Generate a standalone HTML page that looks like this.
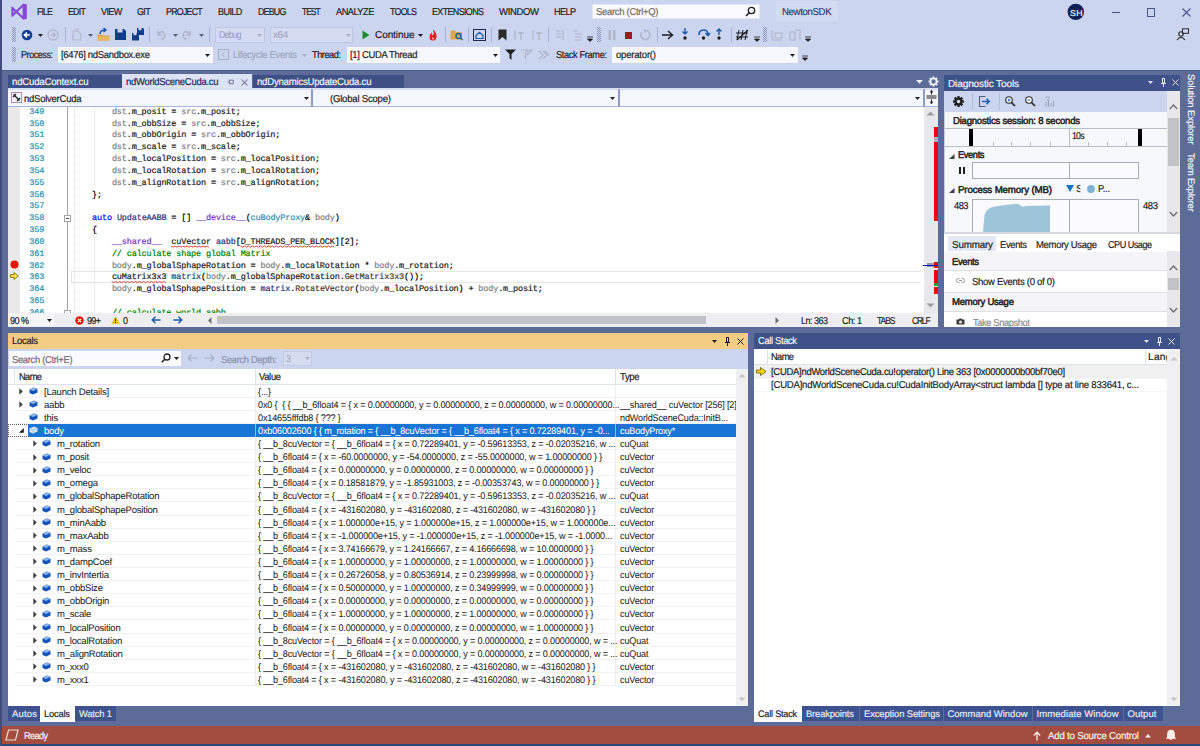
<!DOCTYPE html>
<html><head><meta charset="utf-8"><title>VS</title><style>*{box-sizing:border-box;margin:0;padding:0}
html,body{width:1200px;height:746px;overflow:hidden}
body{position:relative;background:#CCD5F0;font-family:"Liberation Sans",sans-serif;font-size:9px;color:#1E1E1E}
.a{position:absolute}
.t{position:absolute;white-space:pre;line-height:1;-webkit-text-stroke:0.2px currentColor;text-rendering:geometricPrecision}
svg{overflow:visible}
</style></head><body>
<div class="a" style="left:0px;top:0px;width:2px;height:746px;background:#3F4C7C;"></div>
<svg class="a" style="left:11px;top:3px;" width="17" height="17" viewBox="0 0 17 17"><path d="M1.4 5 L12.6 15.6 M1.4 12.4 L12.6 1.8 M1.4 4.6 V12.8" stroke="#8646D6" stroke-width="2.1" fill="none" stroke-linecap="round"/><rect x="11.6" y="1" width="4.2" height="15.3" rx="1.2" fill="#8646D6"/></svg>
<div class="t" id="f1" style="left:36.70px;top:8.00px;font-size:10px;color:#1E1E1E;font-family:'Liberation Sans',sans-serif;letter-spacing:-0.888px;transform-origin:0 0;transform:scaleX(0.8558);">FILE</div>
<div class="t" id="f2" style="left:68.00px;top:8.00px;font-size:10px;color:#1E1E1E;font-family:'Liberation Sans',sans-serif;letter-spacing:-0.830px;transform-origin:0 0;transform:scaleX(0.8773);">EDIT</div>
<div class="t" id="f3" style="left:100.70px;top:8.00px;font-size:10px;color:#1E1E1E;font-family:'Liberation Sans',sans-serif;letter-spacing:-0.710px;transform-origin:0 0;transform:scaleX(0.9090);">VIEW</div>
<div class="t" id="f4" style="left:137.00px;top:8.00px;font-size:10px;color:#1E1E1E;font-family:'Liberation Sans',sans-serif;letter-spacing:-0.743px;transform-origin:0 0;transform:scaleX(0.9022);">GIT</div>
<div class="t" id="f5" style="left:166.00px;top:8.00px;font-size:10px;color:#1E1E1E;font-family:'Liberation Sans',sans-serif;letter-spacing:-0.831px;transform-origin:0 0;transform:scaleX(0.8804);">PROJECT</div>
<div class="t" id="f6" style="left:217.70px;top:8.00px;font-size:10px;color:#1E1E1E;font-family:'Liberation Sans',sans-serif;letter-spacing:-0.644px;transform-origin:0 0;transform:scaleX(0.9041);">BUILD</div>
<div class="t" id="f7" style="left:257.70px;top:8.00px;font-size:10px;color:#1E1E1E;font-family:'Liberation Sans',sans-serif;letter-spacing:-0.908px;transform-origin:0 0;transform:scaleX(0.8863);">DEBUG</div>
<div class="t" id="f8" style="left:302.00px;top:8.00px;font-size:10px;color:#1E1E1E;font-family:'Liberation Sans',sans-serif;letter-spacing:-1.144px;transform-origin:0 0;transform:scaleX(0.8450);">TEST</div>
<div class="t" id="f9" style="left:335.70px;top:8.00px;font-size:10px;color:#1E1E1E;font-family:'Liberation Sans',sans-serif;letter-spacing:-0.545px;transform-origin:0 0;transform:scaleX(0.9213);">ANALYZE</div>
<div class="t" id="f10" style="left:390.00px;top:8.00px;font-size:10px;color:#1E1E1E;font-family:'Liberation Sans',sans-serif;letter-spacing:-0.840px;transform-origin:0 0;transform:scaleX(0.8893);">TOOLS</div>
<div class="t" id="f11" style="left:432.00px;top:8.00px;font-size:10px;color:#1E1E1E;font-family:'Liberation Sans',sans-serif;letter-spacing:-0.693px;transform-origin:0 0;transform:scaleX(0.8929);">EXTENSIONS</div>
<div class="t" id="f12" style="left:499.00px;top:8.00px;font-size:10px;color:#1E1E1E;font-family:'Liberation Sans',sans-serif;letter-spacing:-0.389px;transform-origin:0 0;transform:scaleX(0.9536);">WINDOW</div>
<div class="t" id="f13" style="left:554.00px;top:8.00px;font-size:10px;color:#1E1E1E;font-family:'Liberation Sans',sans-serif;letter-spacing:-0.688px;transform-origin:0 0;transform:scaleX(0.9143);">HELP</div>
<div class="a" style="left:592px;top:4px;width:168px;height:15px;background:#FBFBFD;border:1px solid #E2E6F3"></div>
<div class="t" id="f14" style="left:595.50px;top:8.00px;font-size:10px;color:#6D6D6D;font-family:'Liberation Sans',sans-serif;letter-spacing:-0.278px;transform-origin:0 0;transform:scaleX(0.9413);">Search (Ctrl+Q)</div>
<svg class="a" style="left:745px;top:6px;" width="11" height="11" viewBox="0 0 11 11"><circle cx="6.5" cy="4.5" r="3.2" fill="none" stroke="#1E1E1E" stroke-width="1.3"/><path d="M4.2 6.8 L1 10" stroke="#1E1E1E" stroke-width="1.6"/></svg>
<div class="a" style="left:776px;top:1px;width:62px;height:20px;background:#D3DBF2;"></div>
<div class="t" id="f15" style="left:782.00px;top:8.00px;font-size:10px;color:#2B3C7A;font-family:'Liberation Sans',sans-serif;letter-spacing:-0.311px;transform-origin:0 0;transform:scaleX(0.9522);">NewtonSDK</div>
<svg class="a" style="left:1067px;top:3px;" width="18" height="18" viewBox="0 0 18 18"><circle cx="8.8" cy="8.9" r="8.2" fill="#0F2157"/></svg>
<div class="t" id="f16" style="left:1069.60px;top:9.00px;font-size:8.5px;color:#F2F4FA;font-family:'Liberation Sans',sans-serif;letter-spacing:0.344px;transform-origin:0 0;transform:scaleX(1.0283);">SH</div>
<div class="a" style="left:1112px;top:11.5px;width:8px;height:1.3px;background:#4A5588;"></div>
<div class="a" style="left:1147px;top:8px;width:8px;height:8.5px;background:transparent;border:1.2px solid #4A5588"></div>
<svg class="a" style="left:1182px;top:8px;" width="9" height="9" viewBox="0 0 9 9"><path d="M0.5 0.5 L8.5 8.5 M8.5 0.5 L0.5 8.5" stroke="#4A5588" stroke-width="1.1"/></svg>
<svg class="a" style="left:1176px;top:28px;" width="14" height="13" viewBox="0 0 14 13"><rect x="6.5" y="0.8" width="6" height="4.5" fill="none" stroke="#2A2A2A" stroke-width="1"/><circle cx="5" cy="6" r="2.2" fill="none" stroke="#2A2A2A" stroke-width="1.1"/><path d="M1 12 Q5 6.5 9 12" fill="none" stroke="#2A2A2A" stroke-width="1.1"/></svg>
<svg class="a" style="left:12px;top:27px;" width="4" height="15" viewBox="0 0 4 15"><rect x="0" y="0" width="1" height="1" fill="#8C96BA"/><rect x="2" y="0" width="1" height="1" fill="#8C96BA"/><rect x="1" y="1" width="1" height="1" fill="#8C96BA"/><rect x="3" y="1" width="1" height="1" fill="#8C96BA"/><rect x="0" y="2" width="1" height="1" fill="#8C96BA"/><rect x="2" y="2" width="1" height="1" fill="#8C96BA"/><rect x="1" y="3" width="1" height="1" fill="#8C96BA"/><rect x="3" y="3" width="1" height="1" fill="#8C96BA"/><rect x="0" y="4" width="1" height="1" fill="#8C96BA"/><rect x="2" y="4" width="1" height="1" fill="#8C96BA"/><rect x="1" y="5" width="1" height="1" fill="#8C96BA"/><rect x="3" y="5" width="1" height="1" fill="#8C96BA"/><rect x="0" y="6" width="1" height="1" fill="#8C96BA"/><rect x="2" y="6" width="1" height="1" fill="#8C96BA"/><rect x="1" y="7" width="1" height="1" fill="#8C96BA"/><rect x="3" y="7" width="1" height="1" fill="#8C96BA"/><rect x="0" y="8" width="1" height="1" fill="#8C96BA"/><rect x="2" y="8" width="1" height="1" fill="#8C96BA"/><rect x="1" y="9" width="1" height="1" fill="#8C96BA"/><rect x="3" y="9" width="1" height="1" fill="#8C96BA"/><rect x="0" y="10" width="1" height="1" fill="#8C96BA"/><rect x="2" y="10" width="1" height="1" fill="#8C96BA"/><rect x="1" y="11" width="1" height="1" fill="#8C96BA"/><rect x="3" y="11" width="1" height="1" fill="#8C96BA"/><rect x="0" y="12" width="1" height="1" fill="#8C96BA"/><rect x="2" y="12" width="1" height="1" fill="#8C96BA"/><rect x="1" y="13" width="1" height="1" fill="#8C96BA"/><rect x="3" y="13" width="1" height="1" fill="#8C96BA"/><rect x="0" y="14" width="1" height="1" fill="#8C96BA"/><rect x="2" y="14" width="1" height="1" fill="#8C96BA"/></svg>
<svg class="a" style="left:12px;top:47px;" width="4" height="15" viewBox="0 0 4 15"><rect x="0" y="0" width="1" height="1" fill="#8C96BA"/><rect x="2" y="0" width="1" height="1" fill="#8C96BA"/><rect x="1" y="1" width="1" height="1" fill="#8C96BA"/><rect x="3" y="1" width="1" height="1" fill="#8C96BA"/><rect x="0" y="2" width="1" height="1" fill="#8C96BA"/><rect x="2" y="2" width="1" height="1" fill="#8C96BA"/><rect x="1" y="3" width="1" height="1" fill="#8C96BA"/><rect x="3" y="3" width="1" height="1" fill="#8C96BA"/><rect x="0" y="4" width="1" height="1" fill="#8C96BA"/><rect x="2" y="4" width="1" height="1" fill="#8C96BA"/><rect x="1" y="5" width="1" height="1" fill="#8C96BA"/><rect x="3" y="5" width="1" height="1" fill="#8C96BA"/><rect x="0" y="6" width="1" height="1" fill="#8C96BA"/><rect x="2" y="6" width="1" height="1" fill="#8C96BA"/><rect x="1" y="7" width="1" height="1" fill="#8C96BA"/><rect x="3" y="7" width="1" height="1" fill="#8C96BA"/><rect x="0" y="8" width="1" height="1" fill="#8C96BA"/><rect x="2" y="8" width="1" height="1" fill="#8C96BA"/><rect x="1" y="9" width="1" height="1" fill="#8C96BA"/><rect x="3" y="9" width="1" height="1" fill="#8C96BA"/><rect x="0" y="10" width="1" height="1" fill="#8C96BA"/><rect x="2" y="10" width="1" height="1" fill="#8C96BA"/><rect x="1" y="11" width="1" height="1" fill="#8C96BA"/><rect x="3" y="11" width="1" height="1" fill="#8C96BA"/><rect x="0" y="12" width="1" height="1" fill="#8C96BA"/><rect x="2" y="12" width="1" height="1" fill="#8C96BA"/><rect x="1" y="13" width="1" height="1" fill="#8C96BA"/><rect x="3" y="13" width="1" height="1" fill="#8C96BA"/><rect x="0" y="14" width="1" height="1" fill="#8C96BA"/><rect x="2" y="14" width="1" height="1" fill="#8C96BA"/></svg>
<svg class="a" style="left:21px;top:29px;" width="12" height="12" viewBox="0 0 12 12"><circle cx="6" cy="6" r="5.3" fill="#0E3E8C"/><path d="M8.8 6 H4 M6 3.6 L3.4 6 L6 8.4" stroke="#fff" stroke-width="1.6" fill="none"/></svg>
<svg class="a" style="left:37.5px;top:33.5px;" width="5" height="3" viewBox="0 0 5 3"><path d="M0 0 H5 L2.5 3 Z" fill="#1E1E1E"/></svg>
<svg class="a" style="left:47px;top:29px;" width="12" height="12" viewBox="0 0 12 12"><circle cx="6" cy="6" r="5" fill="none" stroke="#B4B9C9" stroke-width="1.3"/><path d="M3.5 6 H8 M6 3.8 L8.2 6 L6 8.2" stroke="#B4B9C9" stroke-width="1.4" fill="none"/></svg>
<div class="a" style="left:64.5px;top:27px;width:1px;height:15px;background:#A8B3D3;"></div>
<svg class="a" style="left:72px;top:28px;" width="10" height="13" viewBox="0 0 10 13"><path d="M1 3 H6 L9 6 V12 H1 Z M3 1 H7" fill="none" stroke="#B4B9C9" stroke-width="1.1"/></svg>
<svg class="a" style="left:87.5px;top:33.5px;" width="5" height="3" viewBox="0 0 5 3"><path d="M0 0 H5 L2.5 3 Z" fill="#55607F"/></svg>
<svg class="a" style="left:97px;top:28px;" width="13" height="13" viewBox="0 0 13 13"><path d="M0.5 6.5 H5 L6 7.5 H12.5 V12.5 H0.5 Z" fill="#DCA54B"/><path d="M0.5 8.5 H12.5 V12.5 H0.5 Z" fill="#E8B85E"/><path d="M3 6 Q3 2 8 2 M6.5 0 L9 2 L6.5 4" stroke="#1F5BA8" stroke-width="1.5" fill="none"/></svg>
<svg class="a" style="left:115px;top:29px;" width="11" height="11" viewBox="0 0 11 11"><path d="M0 0 H9 L11 2 V11 H0 Z" fill="#0E3E8C"/><rect x="2.5" y="0" width="5" height="3.5" fill="#CCD5F0"/><rect x="2" y="6.5" width="7" height="4.5" fill="#0E3E8C"/></svg>
<svg class="a" style="left:132px;top:28px;" width="12" height="13" viewBox="0 0 12 13"><path d="M5 0 H11 L12 1 V7 H5 Z" fill="#0E3E8C"/><path d="M0 5 H6 L7 6 V12.5 H0 Z" fill="#0E3E8C"/><rect x="1.5" y="5" width="3" height="2.2" fill="#CCD5F0"/><rect x="6.5" y="0" width="3" height="2.2" fill="#CCD5F0"/></svg>
<div class="a" style="left:149px;top:27px;width:1px;height:15px;background:#A8B3D3;"></div>
<svg class="a" style="left:155px;top:29px;" width="11" height="12" viewBox="0 0 11 12"><path d="M3 2 V6 H7 M3 6 Q5 2 8 3 Q11 5 9 9 L6 11" stroke="#B0B6C8" stroke-width="1.5" fill="none"/></svg>
<svg class="a" style="left:172.5px;top:33.5px;" width="5" height="3" viewBox="0 0 5 3"><path d="M0 0 H5 L2.5 3 Z" fill="#55607F"/></svg>
<svg class="a" style="left:182px;top:29px;" width="11" height="12" viewBox="0 0 11 12"><path d="M8 2 V6 H4 M8 6 Q6 2 3 3 Q0 5 2 9 L5 11" stroke="#B0B6C8" stroke-width="1.5" fill="none"/></svg>
<svg class="a" style="left:198.5px;top:33.5px;" width="5" height="3" viewBox="0 0 5 3"><path d="M0 0 H5 L2.5 3 Z" fill="#55607F"/></svg>
<div class="a" style="left:208.5px;top:27px;width:1px;height:15px;background:#A8B3D3;"></div>
<div class="a" style="left:215px;top:27px;width:50px;height:16px;background:#D5DCF1;border:1px solid #BFC8E0"></div>
<div class="t" id="f17" style="left:218.50px;top:31.00px;font-size:10px;color:#9EA6BE;font-family:'Liberation Sans',sans-serif;letter-spacing:-0.871px;transform-origin:0 0;transform:scaleX(0.8659);">Debug</div>
<svg class="a" style="left:256.5px;top:33.5px;" width="5" height="3" viewBox="0 0 5 3"><path d="M0 0 H5 L2.5 3 Z" fill="#A9B0C6"/></svg>
<div class="a" style="left:270px;top:27px;width:83px;height:16px;background:#D5DCF1;border:1px solid #BFC8E0"></div>
<div class="t" id="f18" style="left:272.50px;top:31.00px;font-size:10px;color:#9EA6BE;font-family:'Liberation Sans',sans-serif;letter-spacing:-0.281px;transform-origin:0 0;transform:scaleX(0.9639);">x64</div>
<svg class="a" style="left:345.5px;top:33.5px;" width="5" height="3" viewBox="0 0 5 3"><path d="M0 0 H5 L2.5 3 Z" fill="#A9B0C6"/></svg>
<svg class="a" style="left:362px;top:30px;" width="8" height="10" viewBox="0 0 8 10"><path d="M0.5 0.5 L7.5 5 L0.5 9.5 Z" fill="#1E8A2E"/></svg>
<div class="t" id="f19" style="left:375.00px;top:31.00px;font-size:10px;color:#1E1E1E;font-family:'Liberation Sans',sans-serif;letter-spacing:-0.076px;transform-origin:0 0;transform:none;">Continue</div>
<svg class="a" style="left:417.5px;top:33.5px;" width="5" height="3" viewBox="0 0 5 3"><path d="M0 0 H5 L2.5 3 Z" fill="#1E1E1E"/></svg>
<svg class="a" style="left:428px;top:29px;" width="10" height="12" viewBox="0 0 10 12"><path d="M5 0.5 Q9 4 8.5 8 Q8 11.5 5 11.5 Q1.5 11.5 1.5 8 Q1.5 5 3.5 3.5 Q3.5 6 5 6.5 Q6.5 4 5 0.5 Z" fill="#E02020"/><path d="M5 8 Q6.5 9.5 5 11 Q3.5 9.5 5 8Z" fill="#fff"/></svg>
<div class="a" style="left:445px;top:27px;width:1px;height:15px;background:#A8B3D3;"></div>
<svg class="a" style="left:450px;top:29px;" width="13" height="12" viewBox="0 0 13 12"><path d="M0.5 1.5 H5 L6 3 H12 V10.5 H0.5 Z" fill="#DCA54B"/><circle cx="8.5" cy="7" r="2.5" fill="none" stroke="#1F5BA8" stroke-width="1.3"/><path d="M10.5 9 L12.5 11" stroke="#1F5BA8" stroke-width="1.5"/></svg>
<div class="a" style="left:468px;top:27px;width:1px;height:15px;background:#A8B3D3;"></div>
<svg class="a" style="left:473px;top:29px;" width="13" height="12" viewBox="0 0 13 12"><rect x="0.5" y="0.5" width="12" height="11" fill="none" stroke="#1E2A4A" stroke-width="1"/><path d="M3 6.5 L6.5 3.2 L10 6.5 V9.5 H3 Z" fill="none" stroke="#1F5BA8" stroke-width="1.2"/></svg>
<div class="a" style="left:491px;top:27px;width:1px;height:15px;background:#A8B3D3;"></div>
<svg class="a" style="left:498px;top:29px;" width="9" height="12" viewBox="0 0 9 12"><path d="M0.5 0.5 H8.5 V11.5 L4.5 8 L0.5 11.5 Z" fill="#2B2B2B"/></svg>
<svg class="a" style="left:513px;top:29px;" width="12" height="12" viewBox="0 0 12 12"><path d="M2 1 V11 M8 3 V11 M5 4 H11" stroke="#B0B6C8" stroke-width="1.3"/></svg>
<svg class="a" style="left:531px;top:29px;" width="12" height="12" viewBox="0 0 12 12"><path d="M2 1 V11 M8 3 V11 M5 4 H11" stroke="#B0B6C8" stroke-width="1.3"/></svg>
<div class="a" style="left:548px;top:27px;width:1px;height:15px;background:#A8B3D3;"></div>
<svg class="a" style="left:555px;top:29px;" width="11" height="12" viewBox="0 0 11 12"><path d="M1 2 H6 M1 5 H6 M1 8 H6 M8 1 V11" stroke="#B0B6C8" stroke-width="1.2"/></svg>
<svg class="a" style="left:572px;top:29px;" width="11" height="12" viewBox="0 0 11 12"><path d="M1 2 H6 M3 5 H10 M3 8 H10 M3 11 H10" stroke="#B0B6C8" stroke-width="1.2"/></svg>
<svg class="a" style="left:587px;top:37px;" width="6" height="5" viewBox="0 0 6 5"><path d="M0 0 H6 M0.5 2 H5.5 L3 4.5 Z" stroke="#1E1E1E" stroke-width="0.8" fill="#1E1E1E"/></svg>
<svg class="a" style="left:597px;top:27px;" width="4" height="15" viewBox="0 0 4 15"><rect x="0" y="0" width="1" height="1" fill="#8C96BA"/><rect x="2" y="0" width="1" height="1" fill="#8C96BA"/><rect x="1" y="1" width="1" height="1" fill="#8C96BA"/><rect x="3" y="1" width="1" height="1" fill="#8C96BA"/><rect x="0" y="2" width="1" height="1" fill="#8C96BA"/><rect x="2" y="2" width="1" height="1" fill="#8C96BA"/><rect x="1" y="3" width="1" height="1" fill="#8C96BA"/><rect x="3" y="3" width="1" height="1" fill="#8C96BA"/><rect x="0" y="4" width="1" height="1" fill="#8C96BA"/><rect x="2" y="4" width="1" height="1" fill="#8C96BA"/><rect x="1" y="5" width="1" height="1" fill="#8C96BA"/><rect x="3" y="5" width="1" height="1" fill="#8C96BA"/><rect x="0" y="6" width="1" height="1" fill="#8C96BA"/><rect x="2" y="6" width="1" height="1" fill="#8C96BA"/><rect x="1" y="7" width="1" height="1" fill="#8C96BA"/><rect x="3" y="7" width="1" height="1" fill="#8C96BA"/><rect x="0" y="8" width="1" height="1" fill="#8C96BA"/><rect x="2" y="8" width="1" height="1" fill="#8C96BA"/><rect x="1" y="9" width="1" height="1" fill="#8C96BA"/><rect x="3" y="9" width="1" height="1" fill="#8C96BA"/><rect x="0" y="10" width="1" height="1" fill="#8C96BA"/><rect x="2" y="10" width="1" height="1" fill="#8C96BA"/><rect x="1" y="11" width="1" height="1" fill="#8C96BA"/><rect x="3" y="11" width="1" height="1" fill="#8C96BA"/><rect x="0" y="12" width="1" height="1" fill="#8C96BA"/><rect x="2" y="12" width="1" height="1" fill="#8C96BA"/><rect x="1" y="13" width="1" height="1" fill="#8C96BA"/><rect x="3" y="13" width="1" height="1" fill="#8C96BA"/><rect x="0" y="14" width="1" height="1" fill="#8C96BA"/><rect x="2" y="14" width="1" height="1" fill="#8C96BA"/></svg>
<svg class="a" style="left:608px;top:30px;" width="8" height="10" viewBox="0 0 8 10"><rect x="0.5" y="0" width="2.5" height="10" fill="#B0B6C8"/><rect x="5" y="0" width="2.5" height="10" fill="#B0B6C8"/></svg>
<div class="a" style="left:624.5px;top:31.5px;width:7px;height:7px;background:#A31818;"></div>
<svg class="a" style="left:639px;top:29px;" width="12" height="12" viewBox="0 0 12 12"><path d="M3 3 A4.5 4.5 0 1 0 6 1.5" fill="none" stroke="#B0B6C8" stroke-width="1.6"/><path d="M5 0 L8 2 L5 4" fill="#B0B6C8"/></svg>
<div class="a" style="left:657px;top:27px;width:1px;height:15px;background:#A8B3D3;"></div>
<svg class="a" style="left:662px;top:30px;" width="12" height="10" viewBox="0 0 12 10"><path d="M0 5 H10 M6 1 L10.5 5 L6 9" stroke="#1E1E1E" stroke-width="1.4" fill="none"/></svg>
<svg class="a" style="left:681px;top:28px;" width="8" height="13" viewBox="0 0 8 13"><path d="M4 0 V6 M1.5 3.5 L4 6 L6.5 3.5" stroke="#1F5BA8" stroke-width="1.4" fill="none"/><circle cx="4" cy="10" r="1.7" fill="#1E1E1E"/></svg>
<svg class="a" style="left:697px;top:28px;" width="13" height="13" viewBox="0 0 13 13"><path d="M2 7 Q2 2 6.5 2 Q11 2 11 7 M8.5 5 L11 7.5 L13 5" stroke="#1F5BA8" stroke-width="1.6" fill="none"/><circle cx="6.5" cy="10" r="1.7" fill="#1E1E1E"/></svg>
<svg class="a" style="left:715px;top:28px;" width="8" height="13" viewBox="0 0 8 13"><path d="M4 7 V1 M1.5 3.5 L4 1 L6.5 3.5" stroke="#1F5BA8" stroke-width="1.4" fill="none"/><circle cx="4" cy="10" r="1.7" fill="#1E1E1E"/></svg>
<div class="a" style="left:731px;top:27px;width:1px;height:15px;background:#A8B3D3;"></div>
<svg class="a" style="left:736px;top:29px;" width="13" height="12" viewBox="0 0 13 12"><path d="M3 1 L1 11 M7 1 L5 11 M11 1 L9 11 M0 4 H12 M0 8 H12" stroke="#1E1E1E" stroke-width="1" fill="none"/><path d="M1 11 L12 1" stroke="#1E1E1E" stroke-width="1.2"/></svg>
<svg class="a" style="left:754px;top:37px;" width="6" height="5" viewBox="0 0 6 5"><path d="M0 0 H6 M0.5 2 H5.5 L3 4.5 Z" stroke="#1E1E1E" stroke-width="0.8" fill="#1E1E1E"/></svg>
<svg class="a" style="left:763px;top:27px;" width="4" height="15" viewBox="0 0 4 15"><rect x="0" y="0" width="1" height="1" fill="#8C96BA"/><rect x="2" y="0" width="1" height="1" fill="#8C96BA"/><rect x="1" y="1" width="1" height="1" fill="#8C96BA"/><rect x="3" y="1" width="1" height="1" fill="#8C96BA"/><rect x="0" y="2" width="1" height="1" fill="#8C96BA"/><rect x="2" y="2" width="1" height="1" fill="#8C96BA"/><rect x="1" y="3" width="1" height="1" fill="#8C96BA"/><rect x="3" y="3" width="1" height="1" fill="#8C96BA"/><rect x="0" y="4" width="1" height="1" fill="#8C96BA"/><rect x="2" y="4" width="1" height="1" fill="#8C96BA"/><rect x="1" y="5" width="1" height="1" fill="#8C96BA"/><rect x="3" y="5" width="1" height="1" fill="#8C96BA"/><rect x="0" y="6" width="1" height="1" fill="#8C96BA"/><rect x="2" y="6" width="1" height="1" fill="#8C96BA"/><rect x="1" y="7" width="1" height="1" fill="#8C96BA"/><rect x="3" y="7" width="1" height="1" fill="#8C96BA"/><rect x="0" y="8" width="1" height="1" fill="#8C96BA"/><rect x="2" y="8" width="1" height="1" fill="#8C96BA"/><rect x="1" y="9" width="1" height="1" fill="#8C96BA"/><rect x="3" y="9" width="1" height="1" fill="#8C96BA"/><rect x="0" y="10" width="1" height="1" fill="#8C96BA"/><rect x="2" y="10" width="1" height="1" fill="#8C96BA"/><rect x="1" y="11" width="1" height="1" fill="#8C96BA"/><rect x="3" y="11" width="1" height="1" fill="#8C96BA"/><rect x="0" y="12" width="1" height="1" fill="#8C96BA"/><rect x="2" y="12" width="1" height="1" fill="#8C96BA"/><rect x="1" y="13" width="1" height="1" fill="#8C96BA"/><rect x="3" y="13" width="1" height="1" fill="#8C96BA"/><rect x="0" y="14" width="1" height="1" fill="#8C96BA"/><rect x="2" y="14" width="1" height="1" fill="#8C96BA"/></svg>
<svg class="a" style="left:771px;top:29px;" width="12" height="12" viewBox="0 0 12 12"><path d="M1 1 V11 H11 M4 4 H11 V9 H4 Z" stroke="#B0B6C8" stroke-width="1.1" fill="none"/></svg>
<svg class="a" style="left:789px;top:29px;" width="12" height="12" viewBox="0 0 12 12"><path d="M1 3 H6 V11 H1 Z M6 1 H11 V11" stroke="#B0B6C8" stroke-width="1.1" fill="none"/></svg>
<svg class="a" style="left:805px;top:37px;" width="6" height="5" viewBox="0 0 6 5"><path d="M0 0 H6 M0.5 2 H5.5 L3 4.5 Z" stroke="#1E1E1E" stroke-width="0.8" fill="#1E1E1E"/></svg>
<div class="t" id="f20" style="left:20.60px;top:51.00px;font-size:10px;color:#1E1E1E;font-family:'Liberation Sans',sans-serif;letter-spacing:-0.493px;transform-origin:0 0;transform:scaleX(0.9026);">Process:</div>
<div class="a" style="left:58px;top:47px;width:155px;height:16px;background:#F7F8FD;"></div>
<div class="t" id="f21" style="left:61.00px;top:51.00px;font-size:10px;color:#1E1E1E;font-family:'Liberation Sans',sans-serif;letter-spacing:-0.292px;transform-origin:0 0;transform:scaleX(0.9413);">[6476] ndSandbox.exe</div>
<svg class="a" style="left:204.5px;top:53.5px;" width="5" height="3" viewBox="0 0 5 3"><path d="M0 0 H5 L2.5 3 Z" fill="#1E1E1E"/></svg>
<svg class="a" style="left:218px;top:49px;" width="11" height="11" viewBox="0 0 11 11"><rect x="0.5" y="0.5" width="10" height="10" fill="none" stroke="#A9B0C6"/><path d="M6.5 3 L4 5.5 L6.5 8" stroke="#A9B0C6" fill="none"/></svg>
<div class="t" id="f22" style="left:233.00px;top:51.00px;font-size:10px;color:#9EA6BE;font-family:'Liberation Sans',sans-serif;letter-spacing:-0.276px;transform-origin:0 0;transform:scaleX(0.9393);">Lifecycle Events</div>
<svg class="a" style="left:301.5px;top:53.5px;" width="5" height="3" viewBox="0 0 5 3"><path d="M0 0 H5 L2.5 3 Z" fill="#A9B0C6"/></svg>
<div class="t" id="f23" style="left:312.00px;top:51.00px;font-size:10px;color:#1E1E1E;font-family:'Liberation Sans',sans-serif;letter-spacing:-0.456px;transform-origin:0 0;transform:scaleX(0.9138);">Thread:</div>
<div class="a" style="left:347px;top:47px;width:153px;height:16px;background:#F7F8FD;"></div>
<div class="t" id="f24" style="left:350.00px;top:51.00px;font-size:10px;color:#1E1E1E;font-family:'Liberation Sans',sans-serif;letter-spacing:-0.302px;transform-origin:0 0;transform:scaleX(0.9410);">[1] CUDA Thread</div>
<svg class="a" style="left:492.5px;top:53.5px;" width="5" height="3" viewBox="0 0 5 3"><path d="M0 0 H5 L2.5 3 Z" fill="#1E1E1E"/></svg>
<svg class="a" style="left:505px;top:49px;" width="11" height="11" viewBox="0 0 11 11"><path d="M0 0.5 H11 L6.5 5 V11 L4.5 9 V5 Z" fill="#1E1E1E"/></svg>
<svg class="a" style="left:521px;top:49px;" width="12" height="11" viewBox="0 0 12 11"><path d="M0 1 H7 L4.5 4 V10 M8 3 L11 0 M6 6 L11 1" stroke="#B0B6C8" stroke-width="1.2" fill="none"/></svg>
<svg class="a" style="left:538px;top:49px;" width="12" height="11" viewBox="0 0 12 11"><path d="M1 2 L5 6 L1 10 M5 2 L9 6 L5 10 M7 2 L11 6" stroke="#B0B6C8" stroke-width="1.2" fill="none"/></svg>
<div class="t" id="f25" style="left:556.00px;top:51.00px;font-size:10px;color:#1E1E1E;font-family:'Liberation Sans',sans-serif;letter-spacing:-0.385px;transform-origin:0 0;transform:scaleX(0.9233);">Stack Frame:</div>
<div class="a" style="left:612px;top:47px;width:186px;height:16px;background:#F7F8FD;"></div>
<div class="t" id="f26" style="left:616.00px;top:51.00px;font-size:10px;color:#1E1E1E;font-family:'Liberation Sans',sans-serif;letter-spacing:-0.217px;transform-origin:0 0;transform:scaleX(0.9534);">operator()</div>
<svg class="a" style="left:789.5px;top:53.5px;" width="5" height="3" viewBox="0 0 5 3"><path d="M0 0 H5 L2.5 3 Z" fill="#1E1E1E"/></svg>
<svg class="a" style="left:802px;top:56px;" width="6" height="5" viewBox="0 0 6 5"><path d="M0 0 H6 M0.5 2 H5.5 L3 4.5 Z" stroke="#1E1E1E" stroke-width="0.8" fill="#1E1E1E"/></svg>
<div class="a" style="left:2px;top:70px;width:1198px;height:656px;background:#5D6B99;"></div>
<div class="a" style="left:2px;top:70px;width:1198px;height:1px;background:#4E5B8B;"></div>
<div class="a" style="left:8px;top:75px;width:114px;height:13px;background:#3D4F84;"></div>
<div class="t" id="f27" style="left:12.00px;top:78.00px;font-size:10px;color:#F1F3FA;font-family:'Liberation Sans',sans-serif;letter-spacing:-0.211px;transform-origin:0 0;transform:scaleX(0.9602);">ndCudaContext.cu</div>
<div class="a" style="left:122px;top:74px;width:130px;height:14px;background:#DCE3F6;"></div>
<div class="t" id="f28" style="left:126.00px;top:78.00px;font-size:10px;color:#1E2A5A;font-family:'Liberation Sans',sans-serif;letter-spacing:-0.282px;transform-origin:0 0;transform:scaleX(0.9480);">ndWorldSceneCuda.cu</div>
<svg class="a" style="left:227px;top:79px;" width="7" height="6" viewBox="0 0 7 6"><path d="M0.5 3 H2.5 M2.5 0.8 V5.2 M2.5 1.2 H6.3 V4.8 H2.5" stroke="#6F7899" stroke-width="1" fill="none"/></svg>
<svg class="a" style="left:241px;top:79px;" width="7" height="7" viewBox="0 0 7 7"><path d="M0.5 0.5 L6.5 6.5 M6.5 0.5 L0.5 6.5" stroke="#5F6890" stroke-width="1.05"/></svg>
<div class="a" style="left:253px;top:75px;width:151px;height:13px;background:#3D4F84;"></div>
<div class="t" id="f29" style="left:256.50px;top:78.00px;font-size:10px;color:#F1F3FA;font-family:'Liberation Sans',sans-serif;letter-spacing:-0.228px;transform-origin:0 0;transform:scaleX(0.9581);">ndDynamicsUpdateCuda.cu</div>
<svg class="a" style="left:916px;top:80px;" width="7" height="4" viewBox="0 0 7 4"><path d="M0 0 H7 L3.5 3.8 Z" fill="#F1F3FA"/></svg>
<svg class="a" style="left:928px;top:76px;" width="11" height="11" viewBox="0 0 11 11"><g transform="translate(5.5 5.5)"><rect x="-1" y="-5" width="2" height="2.5" fill="#F1F3FA" transform="rotate(0)"/><rect x="-1" y="-5" width="2" height="2.5" fill="#F1F3FA" transform="rotate(45)"/><rect x="-1" y="-5" width="2" height="2.5" fill="#F1F3FA" transform="rotate(90)"/><rect x="-1" y="-5" width="2" height="2.5" fill="#F1F3FA" transform="rotate(135)"/><rect x="-1" y="-5" width="2" height="2.5" fill="#F1F3FA" transform="rotate(180)"/><rect x="-1" y="-5" width="2" height="2.5" fill="#F1F3FA" transform="rotate(225)"/><rect x="-1" y="-5" width="2" height="2.5" fill="#F1F3FA" transform="rotate(270)"/><rect x="-1" y="-5" width="2" height="2.5" fill="#F1F3FA" transform="rotate(315)"/><circle r="3" fill="none" stroke="#F1F3FA" stroke-width="1.5"/></g></svg>
<div class="a" style="left:8px;top:88px;width:930px;height:18px;background:#F5F6FC;"></div>
<div class="a" style="left:8px;top:88px;width:930px;height:1.5px;background:#D8DFF4;"></div>
<div class="a" style="left:8px;top:105.5px;width:930px;height:1.5px;background:#A8B5D8;"></div>
<svg class="a" style="left:11px;top:92px;" width="11" height="11" viewBox="0 0 11 11"><rect x="0.5" y="0.5" width="10" height="10" fill="none" stroke="#B889B8"/><path d="M2.5 2.5 L8.5 8.5 M2 5 L5 2 M6 9 L9 6" stroke="#1E1E1E" stroke-width="1.3"/></svg>
<div class="t" id="f30" style="left:24.00px;top:95.00px;font-size:10px;color:#1E1E1E;font-family:'Liberation Sans',sans-serif;letter-spacing:-0.267px;transform-origin:0 0;transform:scaleX(0.9514);">ndSolverCuda</div>
<svg class="a" style="left:304.0px;top:97.0px;" width="5" height="3" viewBox="0 0 5 3"><path d="M0 0 H5 L2.5 3 Z" fill="#1E1E1E"/></svg>
<div class="a" style="left:311.3px;top:89px;width:2px;height:17.5px;background:#8F9CC8;"></div>
<div class="t" id="f31" style="left:330.00px;top:95.00px;font-size:10px;color:#1E1E1E;font-family:'Liberation Sans',sans-serif;letter-spacing:-0.219px;transform-origin:0 0;transform:scaleX(0.9553);">(Global Scope)</div>
<svg class="a" style="left:609.8px;top:97.0px;" width="5" height="3" viewBox="0 0 5 3"><path d="M0 0 H5 L2.5 3 Z" fill="#1E1E1E"/></svg>
<div class="a" style="left:617.5px;top:89px;width:2px;height:17.5px;background:#8F9CC8;"></div>
<svg class="a" style="left:915.0px;top:97.0px;" width="5" height="3" viewBox="0 0 5 3"><path d="M0 0 H5 L2.5 3 Z" fill="#1E1E1E"/></svg>
<div class="a" style="left:922.5px;top:89px;width:2px;height:17.5px;background:#8F9CC8;"></div>
<svg class="a" style="left:926px;top:90px;" width="11" height="14" viewBox="0 0 11 14"><path d="M5.5 1 V4.5 M5.5 9.5 V13 M0.5 6 H10.5 M0.5 8 H10.5" stroke="#1E1E1E" stroke-width="1.1" fill="none"/><circle cx="5.5" cy="1.5" r="1.2" fill="#1E1E1E"/><circle cx="5.5" cy="12.5" r="1.2" fill="#1E1E1E"/></svg>
<div class="a" style="left:8px;top:107px;width:916px;height:206px;background:#FFFFFF;"></div>
<div class="a" style="left:8px;top:107px;width:11.5px;height:206px;background:#E9E9EA;"></div>
<div class="a" style="left:67px;top:107px;width:1px;height:206px;background:#A5A5A5;"></div>
<div class="a" style="left:71px;top:270.8px;width:850px;height:12px;background:transparent;border-top:1px solid #E6E6E6;border-bottom:1px solid #E6E6E6;border-left:1px solid #E6E6E6"></div>
<svg class="a" style="left:73.5px;top:107px;" width="1" height="206" viewBox="0 0 1 206"><rect x="0" y="0" width="1" height="1" fill="#DCDCDC"/><rect x="0" y="2" width="1" height="1" fill="#DCDCDC"/><rect x="0" y="4" width="1" height="1" fill="#DCDCDC"/><rect x="0" y="6" width="1" height="1" fill="#DCDCDC"/><rect x="0" y="8" width="1" height="1" fill="#DCDCDC"/><rect x="0" y="10" width="1" height="1" fill="#DCDCDC"/><rect x="0" y="12" width="1" height="1" fill="#DCDCDC"/><rect x="0" y="14" width="1" height="1" fill="#DCDCDC"/><rect x="0" y="16" width="1" height="1" fill="#DCDCDC"/><rect x="0" y="18" width="1" height="1" fill="#DCDCDC"/><rect x="0" y="20" width="1" height="1" fill="#DCDCDC"/><rect x="0" y="22" width="1" height="1" fill="#DCDCDC"/><rect x="0" y="24" width="1" height="1" fill="#DCDCDC"/><rect x="0" y="26" width="1" height="1" fill="#DCDCDC"/><rect x="0" y="28" width="1" height="1" fill="#DCDCDC"/><rect x="0" y="30" width="1" height="1" fill="#DCDCDC"/><rect x="0" y="32" width="1" height="1" fill="#DCDCDC"/><rect x="0" y="34" width="1" height="1" fill="#DCDCDC"/><rect x="0" y="36" width="1" height="1" fill="#DCDCDC"/><rect x="0" y="38" width="1" height="1" fill="#DCDCDC"/><rect x="0" y="40" width="1" height="1" fill="#DCDCDC"/><rect x="0" y="42" width="1" height="1" fill="#DCDCDC"/><rect x="0" y="44" width="1" height="1" fill="#DCDCDC"/><rect x="0" y="46" width="1" height="1" fill="#DCDCDC"/><rect x="0" y="48" width="1" height="1" fill="#DCDCDC"/><rect x="0" y="50" width="1" height="1" fill="#DCDCDC"/><rect x="0" y="52" width="1" height="1" fill="#DCDCDC"/><rect x="0" y="54" width="1" height="1" fill="#DCDCDC"/><rect x="0" y="56" width="1" height="1" fill="#DCDCDC"/><rect x="0" y="58" width="1" height="1" fill="#DCDCDC"/><rect x="0" y="60" width="1" height="1" fill="#DCDCDC"/><rect x="0" y="62" width="1" height="1" fill="#DCDCDC"/><rect x="0" y="64" width="1" height="1" fill="#DCDCDC"/><rect x="0" y="66" width="1" height="1" fill="#DCDCDC"/><rect x="0" y="68" width="1" height="1" fill="#DCDCDC"/><rect x="0" y="70" width="1" height="1" fill="#DCDCDC"/><rect x="0" y="72" width="1" height="1" fill="#DCDCDC"/><rect x="0" y="74" width="1" height="1" fill="#DCDCDC"/><rect x="0" y="76" width="1" height="1" fill="#DCDCDC"/><rect x="0" y="78" width="1" height="1" fill="#DCDCDC"/><rect x="0" y="80" width="1" height="1" fill="#DCDCDC"/><rect x="0" y="82" width="1" height="1" fill="#DCDCDC"/><rect x="0" y="84" width="1" height="1" fill="#DCDCDC"/><rect x="0" y="86" width="1" height="1" fill="#DCDCDC"/><rect x="0" y="88" width="1" height="1" fill="#DCDCDC"/><rect x="0" y="90" width="1" height="1" fill="#DCDCDC"/><rect x="0" y="92" width="1" height="1" fill="#DCDCDC"/><rect x="0" y="94" width="1" height="1" fill="#DCDCDC"/><rect x="0" y="96" width="1" height="1" fill="#DCDCDC"/><rect x="0" y="98" width="1" height="1" fill="#DCDCDC"/><rect x="0" y="100" width="1" height="1" fill="#DCDCDC"/><rect x="0" y="102" width="1" height="1" fill="#DCDCDC"/><rect x="0" y="104" width="1" height="1" fill="#DCDCDC"/><rect x="0" y="106" width="1" height="1" fill="#DCDCDC"/><rect x="0" y="108" width="1" height="1" fill="#DCDCDC"/><rect x="0" y="110" width="1" height="1" fill="#DCDCDC"/><rect x="0" y="112" width="1" height="1" fill="#DCDCDC"/><rect x="0" y="114" width="1" height="1" fill="#DCDCDC"/><rect x="0" y="116" width="1" height="1" fill="#DCDCDC"/><rect x="0" y="118" width="1" height="1" fill="#DCDCDC"/><rect x="0" y="120" width="1" height="1" fill="#DCDCDC"/><rect x="0" y="122" width="1" height="1" fill="#DCDCDC"/><rect x="0" y="124" width="1" height="1" fill="#DCDCDC"/><rect x="0" y="126" width="1" height="1" fill="#DCDCDC"/><rect x="0" y="128" width="1" height="1" fill="#DCDCDC"/><rect x="0" y="130" width="1" height="1" fill="#DCDCDC"/><rect x="0" y="132" width="1" height="1" fill="#DCDCDC"/><rect x="0" y="134" width="1" height="1" fill="#DCDCDC"/><rect x="0" y="136" width="1" height="1" fill="#DCDCDC"/><rect x="0" y="138" width="1" height="1" fill="#DCDCDC"/><rect x="0" y="140" width="1" height="1" fill="#DCDCDC"/><rect x="0" y="142" width="1" height="1" fill="#DCDCDC"/><rect x="0" y="144" width="1" height="1" fill="#DCDCDC"/><rect x="0" y="146" width="1" height="1" fill="#DCDCDC"/><rect x="0" y="148" width="1" height="1" fill="#DCDCDC"/><rect x="0" y="150" width="1" height="1" fill="#DCDCDC"/><rect x="0" y="152" width="1" height="1" fill="#DCDCDC"/><rect x="0" y="154" width="1" height="1" fill="#DCDCDC"/><rect x="0" y="156" width="1" height="1" fill="#DCDCDC"/><rect x="0" y="158" width="1" height="1" fill="#DCDCDC"/><rect x="0" y="160" width="1" height="1" fill="#DCDCDC"/><rect x="0" y="162" width="1" height="1" fill="#DCDCDC"/><rect x="0" y="164" width="1" height="1" fill="#DCDCDC"/><rect x="0" y="166" width="1" height="1" fill="#DCDCDC"/><rect x="0" y="168" width="1" height="1" fill="#DCDCDC"/><rect x="0" y="170" width="1" height="1" fill="#DCDCDC"/><rect x="0" y="172" width="1" height="1" fill="#DCDCDC"/><rect x="0" y="174" width="1" height="1" fill="#DCDCDC"/><rect x="0" y="176" width="1" height="1" fill="#DCDCDC"/><rect x="0" y="178" width="1" height="1" fill="#DCDCDC"/><rect x="0" y="180" width="1" height="1" fill="#DCDCDC"/><rect x="0" y="182" width="1" height="1" fill="#DCDCDC"/><rect x="0" y="184" width="1" height="1" fill="#DCDCDC"/><rect x="0" y="186" width="1" height="1" fill="#DCDCDC"/><rect x="0" y="188" width="1" height="1" fill="#DCDCDC"/><rect x="0" y="190" width="1" height="1" fill="#DCDCDC"/><rect x="0" y="192" width="1" height="1" fill="#DCDCDC"/><rect x="0" y="194" width="1" height="1" fill="#DCDCDC"/><rect x="0" y="196" width="1" height="1" fill="#DCDCDC"/><rect x="0" y="198" width="1" height="1" fill="#DCDCDC"/><rect x="0" y="200" width="1" height="1" fill="#DCDCDC"/><rect x="0" y="202" width="1" height="1" fill="#DCDCDC"/><rect x="0" y="204" width="1" height="1" fill="#DCDCDC"/></svg>
<svg class="a" style="left:93.5px;top:107px;" width="1" height="80" viewBox="0 0 1 80"><rect x="0" y="0" width="1" height="1" fill="#DCDCDC"/><rect x="0" y="2" width="1" height="1" fill="#DCDCDC"/><rect x="0" y="4" width="1" height="1" fill="#DCDCDC"/><rect x="0" y="6" width="1" height="1" fill="#DCDCDC"/><rect x="0" y="8" width="1" height="1" fill="#DCDCDC"/><rect x="0" y="10" width="1" height="1" fill="#DCDCDC"/><rect x="0" y="12" width="1" height="1" fill="#DCDCDC"/><rect x="0" y="14" width="1" height="1" fill="#DCDCDC"/><rect x="0" y="16" width="1" height="1" fill="#DCDCDC"/><rect x="0" y="18" width="1" height="1" fill="#DCDCDC"/><rect x="0" y="20" width="1" height="1" fill="#DCDCDC"/><rect x="0" y="22" width="1" height="1" fill="#DCDCDC"/><rect x="0" y="24" width="1" height="1" fill="#DCDCDC"/><rect x="0" y="26" width="1" height="1" fill="#DCDCDC"/><rect x="0" y="28" width="1" height="1" fill="#DCDCDC"/><rect x="0" y="30" width="1" height="1" fill="#DCDCDC"/><rect x="0" y="32" width="1" height="1" fill="#DCDCDC"/><rect x="0" y="34" width="1" height="1" fill="#DCDCDC"/><rect x="0" y="36" width="1" height="1" fill="#DCDCDC"/><rect x="0" y="38" width="1" height="1" fill="#DCDCDC"/><rect x="0" y="40" width="1" height="1" fill="#DCDCDC"/><rect x="0" y="42" width="1" height="1" fill="#DCDCDC"/><rect x="0" y="44" width="1" height="1" fill="#DCDCDC"/><rect x="0" y="46" width="1" height="1" fill="#DCDCDC"/><rect x="0" y="48" width="1" height="1" fill="#DCDCDC"/><rect x="0" y="50" width="1" height="1" fill="#DCDCDC"/><rect x="0" y="52" width="1" height="1" fill="#DCDCDC"/><rect x="0" y="54" width="1" height="1" fill="#DCDCDC"/><rect x="0" y="56" width="1" height="1" fill="#DCDCDC"/><rect x="0" y="58" width="1" height="1" fill="#DCDCDC"/><rect x="0" y="60" width="1" height="1" fill="#DCDCDC"/><rect x="0" y="62" width="1" height="1" fill="#DCDCDC"/><rect x="0" y="64" width="1" height="1" fill="#DCDCDC"/><rect x="0" y="66" width="1" height="1" fill="#DCDCDC"/><rect x="0" y="68" width="1" height="1" fill="#DCDCDC"/><rect x="0" y="70" width="1" height="1" fill="#DCDCDC"/><rect x="0" y="72" width="1" height="1" fill="#DCDCDC"/><rect x="0" y="74" width="1" height="1" fill="#DCDCDC"/><rect x="0" y="76" width="1" height="1" fill="#DCDCDC"/><rect x="0" y="78" width="1" height="1" fill="#DCDCDC"/></svg>
<svg class="a" style="left:93.5px;top:231px;" width="1" height="82" viewBox="0 0 1 82"><rect x="0" y="0" width="1" height="1" fill="#DCDCDC"/><rect x="0" y="2" width="1" height="1" fill="#DCDCDC"/><rect x="0" y="4" width="1" height="1" fill="#DCDCDC"/><rect x="0" y="6" width="1" height="1" fill="#DCDCDC"/><rect x="0" y="8" width="1" height="1" fill="#DCDCDC"/><rect x="0" y="10" width="1" height="1" fill="#DCDCDC"/><rect x="0" y="12" width="1" height="1" fill="#DCDCDC"/><rect x="0" y="14" width="1" height="1" fill="#DCDCDC"/><rect x="0" y="16" width="1" height="1" fill="#DCDCDC"/><rect x="0" y="18" width="1" height="1" fill="#DCDCDC"/><rect x="0" y="20" width="1" height="1" fill="#DCDCDC"/><rect x="0" y="22" width="1" height="1" fill="#DCDCDC"/><rect x="0" y="24" width="1" height="1" fill="#DCDCDC"/><rect x="0" y="26" width="1" height="1" fill="#DCDCDC"/><rect x="0" y="28" width="1" height="1" fill="#DCDCDC"/><rect x="0" y="30" width="1" height="1" fill="#DCDCDC"/><rect x="0" y="32" width="1" height="1" fill="#DCDCDC"/><rect x="0" y="34" width="1" height="1" fill="#DCDCDC"/><rect x="0" y="36" width="1" height="1" fill="#DCDCDC"/><rect x="0" y="38" width="1" height="1" fill="#DCDCDC"/><rect x="0" y="40" width="1" height="1" fill="#DCDCDC"/><rect x="0" y="42" width="1" height="1" fill="#DCDCDC"/><rect x="0" y="44" width="1" height="1" fill="#DCDCDC"/><rect x="0" y="46" width="1" height="1" fill="#DCDCDC"/><rect x="0" y="48" width="1" height="1" fill="#DCDCDC"/><rect x="0" y="50" width="1" height="1" fill="#DCDCDC"/><rect x="0" y="52" width="1" height="1" fill="#DCDCDC"/><rect x="0" y="54" width="1" height="1" fill="#DCDCDC"/><rect x="0" y="56" width="1" height="1" fill="#DCDCDC"/><rect x="0" y="58" width="1" height="1" fill="#DCDCDC"/><rect x="0" y="60" width="1" height="1" fill="#DCDCDC"/><rect x="0" y="62" width="1" height="1" fill="#DCDCDC"/><rect x="0" y="64" width="1" height="1" fill="#DCDCDC"/><rect x="0" y="66" width="1" height="1" fill="#DCDCDC"/><rect x="0" y="68" width="1" height="1" fill="#DCDCDC"/><rect x="0" y="70" width="1" height="1" fill="#DCDCDC"/><rect x="0" y="72" width="1" height="1" fill="#DCDCDC"/><rect x="0" y="74" width="1" height="1" fill="#DCDCDC"/><rect x="0" y="76" width="1" height="1" fill="#DCDCDC"/><rect x="0" y="78" width="1" height="1" fill="#DCDCDC"/><rect x="0" y="80" width="1" height="1" fill="#DCDCDC"/></svg>
<div class="a" style="left:8px;top:107px;width:916px;height:206px;overflow:hidden">
<div class="t" style="left:21.25px;top:0.79px;font-family:'Liberation Mono',monospace;font-size:8.5px;letter-spacing:-0.150px;color:#2B91AF">349</div>
<div class="t" style="left:64.30px;top:0.79px;font-family:'Liberation Mono',monospace;font-size:8.5px;letter-spacing:-0.150px"><span style="color:#000000">        </span><span style="color:#808080">dst</span><span style="color:#000000">.</span><span style="color:#1A1A1A">m_posit</span><span style="color:#000000"> = </span><span style="color:#808080">src</span><span style="color:#000000">.</span><span style="color:#1A1A1A">m_posit</span><span style="color:#000000">;</span></div>
<div class="t" style="left:21.25px;top:12.62px;font-family:'Liberation Mono',monospace;font-size:8.5px;letter-spacing:-0.150px;color:#2B91AF">350</div>
<div class="t" style="left:64.30px;top:12.62px;font-family:'Liberation Mono',monospace;font-size:8.5px;letter-spacing:-0.150px"><span style="color:#000000">        </span><span style="color:#808080">dst</span><span style="color:#000000">.</span><span style="color:#1A1A1A">m_obbSize</span><span style="color:#000000"> = </span><span style="color:#808080">src</span><span style="color:#000000">.</span><span style="color:#1A1A1A">m_obbSize</span><span style="color:#000000">;</span></div>
<div class="t" style="left:21.25px;top:24.45px;font-family:'Liberation Mono',monospace;font-size:8.5px;letter-spacing:-0.150px;color:#2B91AF">351</div>
<div class="t" style="left:64.30px;top:24.45px;font-family:'Liberation Mono',monospace;font-size:8.5px;letter-spacing:-0.150px"><span style="color:#000000">        </span><span style="color:#808080">dst</span><span style="color:#000000">.</span><span style="color:#1A1A1A">m_obbOrigin</span><span style="color:#000000"> = </span><span style="color:#808080">src</span><span style="color:#000000">.</span><span style="color:#1A1A1A">m_obbOrigin</span><span style="color:#000000">;</span></div>
<div class="t" style="left:21.25px;top:36.28px;font-family:'Liberation Mono',monospace;font-size:8.5px;letter-spacing:-0.150px;color:#2B91AF">352</div>
<div class="t" style="left:64.30px;top:36.28px;font-family:'Liberation Mono',monospace;font-size:8.5px;letter-spacing:-0.150px"><span style="color:#000000">        </span><span style="color:#808080">dst</span><span style="color:#000000">.</span><span style="color:#1A1A1A">m_scale</span><span style="color:#000000"> = </span><span style="color:#808080">src</span><span style="color:#000000">.</span><span style="color:#1A1A1A">m_scale</span><span style="color:#000000">;</span></div>
<div class="t" style="left:21.25px;top:48.11px;font-family:'Liberation Mono',monospace;font-size:8.5px;letter-spacing:-0.150px;color:#2B91AF">353</div>
<div class="t" style="left:64.30px;top:48.11px;font-family:'Liberation Mono',monospace;font-size:8.5px;letter-spacing:-0.150px"><span style="color:#000000">        </span><span style="color:#808080">dst</span><span style="color:#000000">.</span><span style="color:#1A1A1A">m_localPosition</span><span style="color:#000000"> = </span><span style="color:#808080">src</span><span style="color:#000000">.</span><span style="color:#1A1A1A">m_localPosition</span><span style="color:#000000">;</span></div>
<div class="t" style="left:21.25px;top:59.94px;font-family:'Liberation Mono',monospace;font-size:8.5px;letter-spacing:-0.150px;color:#2B91AF">354</div>
<div class="t" style="left:64.30px;top:59.94px;font-family:'Liberation Mono',monospace;font-size:8.5px;letter-spacing:-0.150px"><span style="color:#000000">        </span><span style="color:#808080">dst</span><span style="color:#000000">.</span><span style="color:#1A1A1A">m_localRotation</span><span style="color:#000000"> = </span><span style="color:#808080">src</span><span style="color:#000000">.</span><span style="color:#1A1A1A">m_localRotation</span><span style="color:#000000">;</span></div>
<div class="t" style="left:21.25px;top:71.77px;font-family:'Liberation Mono',monospace;font-size:8.5px;letter-spacing:-0.150px;color:#2B91AF">355</div>
<div class="t" style="left:64.30px;top:71.77px;font-family:'Liberation Mono',monospace;font-size:8.5px;letter-spacing:-0.150px"><span style="color:#000000">        </span><span style="color:#808080">dst</span><span style="color:#000000">.</span><span style="color:#1A1A1A">m_alignRotation</span><span style="color:#000000"> = </span><span style="color:#808080">src</span><span style="color:#000000">.</span><span style="color:#1A1A1A">m_alignRotation</span><span style="color:#000000">;</span></div>
<div class="t" style="left:21.25px;top:83.60px;font-family:'Liberation Mono',monospace;font-size:8.5px;letter-spacing:-0.150px;color:#2B91AF">356</div>
<div class="t" style="left:64.30px;top:83.60px;font-family:'Liberation Mono',monospace;font-size:8.5px;letter-spacing:-0.150px"><span style="color:#000000">    };</span></div>
<div class="t" style="left:21.25px;top:95.43px;font-family:'Liberation Mono',monospace;font-size:8.5px;letter-spacing:-0.150px;color:#2B91AF">357</div>
<div class="t" style="left:21.25px;top:107.26px;font-family:'Liberation Mono',monospace;font-size:8.5px;letter-spacing:-0.150px;color:#2B91AF">358</div>
<div class="t" style="left:64.30px;top:107.26px;font-family:'Liberation Mono',monospace;font-size:8.5px;letter-spacing:-0.150px"><span style="color:#000000">    </span><span style="color:#0000FF">auto</span><span style="color:#000000"> </span><span style="color:#1F377F">UpdateAABB</span><span style="color:#000000"> = [] </span><span style="color:#7A35C0">__device__</span><span style="color:#000000">(</span><span style="color:#2B91AF">cuBodyProxy</span><span style="color:#000000">&amp; </span><span style="color:#808080">body</span><span style="color:#000000">)</span></div>
<div class="t" style="left:21.25px;top:119.09px;font-family:'Liberation Mono',monospace;font-size:8.5px;letter-spacing:-0.150px;color:#2B91AF">359</div>
<div class="t" style="left:64.30px;top:119.09px;font-family:'Liberation Mono',monospace;font-size:8.5px;letter-spacing:-0.150px"><span style="color:#000000">    {</span></div>
<div class="t" style="left:21.25px;top:130.92px;font-family:'Liberation Mono',monospace;font-size:8.5px;letter-spacing:-0.150px;color:#2B91AF">360</div>
<div class="t" style="left:64.30px;top:130.92px;font-family:'Liberation Mono',monospace;font-size:8.5px;letter-spacing:-0.150px"><span style="color:#000000">        </span><span style="color:#7A35C0">__shared__</span><span style="color:#000000">  </span><span style="color:#1A1A1A">cuVector</span><span style="color:#000000"> </span><span style="color:#1F377F">aabb</span><span style="color:#000000">[</span><span style="color:#1A1A1A">D_THREADS_PER_BLOCK</span><span style="color:#000000">][2];</span></div>
<div class="t" style="left:21.25px;top:142.75px;font-family:'Liberation Mono',monospace;font-size:8.5px;letter-spacing:-0.150px;color:#2B91AF">361</div>
<div class="t" style="left:64.30px;top:142.75px;font-family:'Liberation Mono',monospace;font-size:8.5px;letter-spacing:-0.150px"><span style="color:#000000">        </span><span style="color:#008000">// calculate shape global Matrix</span></div>
<div class="t" style="left:21.25px;top:154.58px;font-family:'Liberation Mono',monospace;font-size:8.5px;letter-spacing:-0.150px;color:#2B91AF">362</div>
<div class="t" style="left:64.30px;top:154.58px;font-family:'Liberation Mono',monospace;font-size:8.5px;letter-spacing:-0.150px"><span style="color:#000000">        </span><span style="color:#808080">body</span><span style="color:#000000">.</span><span style="color:#1A1A1A">m_globalSphapeRotation</span><span style="color:#000000"> = </span><span style="color:#808080">body</span><span style="color:#000000">.</span><span style="color:#1A1A1A">m_localRotation</span><span style="color:#000000"> * </span><span style="color:#808080">body</span><span style="color:#000000">.</span><span style="color:#1A1A1A">m_rotation</span><span style="color:#000000">;</span></div>
<div class="t" style="left:21.25px;top:166.41px;font-family:'Liberation Mono',monospace;font-size:8.5px;letter-spacing:-0.150px;color:#2B91AF">363</div>
<div class="t" style="left:64.30px;top:166.41px;font-family:'Liberation Mono',monospace;font-size:8.5px;letter-spacing:-0.150px"><span style="color:#000000">        </span><span style="color:#1A1A1A">cuMatrix3x3</span><span style="color:#000000"> </span><span style="color:#1F377F">matrix</span><span style="color:#000000">(</span><span style="color:#808080">body</span><span style="color:#000000">.</span><span style="color:#1A1A1A">m_globalSphapeRotation</span><span style="color:#000000">.</span><span style="color:#4A3A1F">GetMatrix3x3</span><span style="color:#000000">());</span></div>
<div class="t" style="left:21.25px;top:178.24px;font-family:'Liberation Mono',monospace;font-size:8.5px;letter-spacing:-0.150px;color:#2B91AF">364</div>
<div class="t" style="left:64.30px;top:178.24px;font-family:'Liberation Mono',monospace;font-size:8.5px;letter-spacing:-0.150px"><span style="color:#000000">        </span><span style="color:#808080">body</span><span style="color:#000000">.</span><span style="color:#1A1A1A">m_globalSphapePosition</span><span style="color:#000000"> = </span><span style="color:#1F377F">matrix</span><span style="color:#000000">.</span><span style="color:#4A3A1F">RotateVector</span><span style="color:#000000">(</span><span style="color:#808080">body</span><span style="color:#000000">.</span><span style="color:#1A1A1A">m_localPosition</span><span style="color:#000000">) + </span><span style="color:#808080">body</span><span style="color:#000000">.</span><span style="color:#1A1A1A">m_posit</span><span style="color:#000000">;</span></div>
<div class="t" style="left:21.25px;top:190.07px;font-family:'Liberation Mono',monospace;font-size:8.5px;letter-spacing:-0.150px;color:#2B91AF">365</div>
<div class="t" style="left:21.25px;top:201.90px;font-family:'Liberation Mono',monospace;font-size:8.5px;letter-spacing:-0.150px;color:#2B91AF">366</div>
<div class="t" style="left:64.30px;top:201.90px;font-family:'Liberation Mono',monospace;font-size:8.5px;letter-spacing:-0.150px"><span style="color:#000000">        </span><span style="color:#008000">// calculate world aabb</span></div>
</div>
<svg class="a" style="left:63.5px;top:215.07px;" width="7" height="7" viewBox="0 0 7 7"><rect x="0.5" y="0.5" width="6" height="6" fill="#fff" stroke="#A5A5A5"/><path d="M2 3.5 H5" stroke="#555" stroke-width="1"/></svg>
<svg class="a" style="left:63.5px;top:309.71000000000004px;" width="7" height="7" viewBox="0 0 7 7"><rect x="0.5" y="0.5" width="6" height="6" fill="#fff" stroke="#A5A5A5"/><path d="M2 3.5 H5" stroke="#555" stroke-width="1"/></svg>
<svg class="a" style="left:0px;top:0px;" width="1" height="1" viewBox="0 0 1 1"><path d="M171.0 246.0 L173.0 247.2 L175.0 246.0 L177.0 247.2 L179.0 246.0 L181.0 247.2 L183.0 246.0 L185.0 247.2 L187.0 246.0 L189.0 247.2 L191.0 246.0 L193.0 247.2 L195.0 246.0 L197.0 247.2 L199.0 246.0 L201.0 247.2 L203.0 246.0 L205.0 247.2 L207.0 246.0 L209.0 247.2" stroke="#E51400" stroke-width="0.8" fill="none"/></svg>
<svg class="a" style="left:0px;top:0px;" width="1" height="1" viewBox="0 0 1 1"><path d="M240.3 246.0 L242.3 247.2 L244.3 246.0 L246.3 247.2 L248.3 246.0 L250.3 247.2 L252.3 246.0 L254.3 247.2 L256.3 246.0 L258.3 247.2 L260.3 246.0 L262.3 247.2 L264.3 246.0 L266.3 247.2 L268.3 246.0 L270.3 247.2 L272.3 246.0 L274.3 247.2 L276.3 246.0 L278.3 247.2 L280.3 246.0 L282.3 247.2 L284.3 246.0 L286.3 247.2 L288.3 246.0 L290.3 247.2 L292.3 246.0 L294.3 247.2 L296.3 246.0 L298.3 247.2 L300.3 246.0 L302.3 247.2 L304.3 246.0 L306.3 247.2 L308.3 246.0 L310.3 247.2 L312.3 246.0 L314.3 247.2 L316.3 246.0 L318.3 247.2 L320.3 246.0 L322.3 247.2 L324.3 246.0 L326.3 247.2 L328.3 246.0 L330.3 247.2 L332.3 246.0 L334.3 247.2" stroke="#E51400" stroke-width="0.8" fill="none"/></svg>
<svg class="a" style="left:0px;top:0px;" width="1" height="1" viewBox="0 0 1 1"><path d="M111.6 281.5 L113.6 282.7 L115.6 281.5 L117.6 282.7 L119.6 281.5 L121.6 282.7 L123.6 281.5 L125.6 282.7 L127.6 281.5 L129.6 282.7 L131.6 281.5 L133.6 282.7 L135.6 281.5 L137.6 282.7 L139.6 281.5 L141.6 282.7 L143.6 281.5 L145.6 282.7 L147.6 281.5 L149.6 282.7 L151.6 281.5 L153.6 282.7 L155.6 281.5 L157.6 282.7 L159.6 281.5 L161.6 282.7 L163.6 281.5 L165.6 282.7" stroke="#E51400" stroke-width="0.8" fill="none"/></svg>
<svg class="a" style="left:9.5px;top:259.78999999999996px;" width="9" height="9" viewBox="0 0 9 9"><circle cx="4.5" cy="4.5" r="4" fill="#E51400"/></svg>
<svg class="a" style="left:9.5px;top:272.42px;" width="9" height="8" viewBox="0 0 9 8"><path d="M0.5 2.5 H4 V0.5 L8.3 4 L4 7.5 V5.5 H0.5 Z" fill="#F5E03A" stroke="#6B5A00" stroke-width="0.7"/></svg>
<div class="a" style="left:924px;top:107px;width:14px;height:206px;background:#E8E8EC;"></div>
<svg class="a" style="left:926px;top:111px;" width="9" height="5" viewBox="0 0 9 5"><path d="M0.5 4.5 L4.5 0.5 L8.5 4.5 Z" fill="#9A9AA0"/></svg>
<svg class="a" style="left:926px;top:303px;" width="9" height="5" viewBox="0 0 9 5"><path d="M0.5 0.5 L4.5 4.5 L8.5 0.5 Z" fill="#9A9AA0"/></svg>
<div class="a" style="left:934px;top:126.5px;width:4px;height:94.5px;background:#F00000;"></div>
<div class="a" style="left:934px;top:137px;width:4px;height:5px;background:#B0B0B0;"></div>
<div class="a" style="left:934px;top:262px;width:4px;height:6px;background:#F00000;"></div>
<div class="a" style="left:934px;top:270px;width:4px;height:13px;background:#F00000;"></div>
<div class="a" style="left:934px;top:283px;width:4px;height:2.5px;background:#1E9E1E;"></div>
<div class="a" style="left:934px;top:287px;width:4px;height:7px;background:#F00000;"></div>
<div class="a" style="left:927px;top:263px;width:7px;height:4px;background:#9A9AA0;"></div>
<div class="a" style="left:923px;top:265px;width:15px;height:1.3px;background:#1010C0;"></div>
<div class="a" style="left:8px;top:313px;width:930px;height:13.5px;background:#EEEEF2;"></div>
<div class="a" style="left:8px;top:313px;width:46px;height:12.5px;background:#F6F6F8;"></div>
<div class="t" id="f32" style="left:9.50px;top:317.00px;font-size:10px;color:#1E1E1E;font-family:'Liberation Sans',sans-serif;letter-spacing:-0.633px;transform-origin:0 0;transform:scaleX(0.9092);">90 %</div>
<svg class="a" style="left:46.5px;top:318.5px;" width="5" height="3" viewBox="0 0 5 3"><path d="M0 0 H5 L2.5 3 Z" fill="#1E1E1E"/></svg>
<svg class="a" style="left:74.5px;top:315.5px;" width="9" height="9" viewBox="0 0 9 9"><circle cx="4.5" cy="4.5" r="4.2" fill="#E51400"/><path d="M2.9 2.9 L6.1 6.1 M6.1 2.9 L2.9 6.1" stroke="#fff" stroke-width="1.2"/></svg>
<div class="t" id="f33" style="left:87.00px;top:317.00px;font-size:10px;color:#1E1E1E;font-family:'Liberation Sans',sans-serif;letter-spacing:-0.742px;transform-origin:0 0;transform:scaleX(0.9041);">99+</div>
<svg class="a" style="left:110.5px;top:315.5px;" width="9" height="8" viewBox="0 0 9 8"><path d="M4.5 0.3 L8.8 7.7 H0.2 Z" fill="#F4C000"/><path d="M4.5 2.5 V5.2 M4.5 6 V7" stroke="#1E1E1E" stroke-width="0.9"/></svg>
<div class="t" id="f34" style="left:123.00px;top:317.00px;font-size:10px;color:#1E1E1E;font-family:'Liberation Sans',sans-serif;letter-spacing:-0.531px;transform-origin:0 0;transform:scaleX(0.8944);">0</div>
<svg class="a" style="left:151px;top:316px;" width="10" height="8" viewBox="0 0 10 8"><path d="M9.5 4 H1.5 M4.5 0.8 L1.2 4 L4.5 7.2" stroke="#1F5BA8" stroke-width="1.4" fill="none"/></svg>
<svg class="a" style="left:173px;top:316px;" width="10" height="8" viewBox="0 0 10 8"><path d="M0.5 4 H8.5 M5.5 0.8 L8.8 4 L5.5 7.2" stroke="#1F5BA8" stroke-width="1.4" fill="none"/></svg>
<svg class="a" style="left:208px;top:316.5px;" width="4" height="7" viewBox="0 0 4 7"><path d="M3.5 0 V7 L0 3.5 Z" fill="#707070"/></svg>
<div class="a" style="left:217px;top:316px;width:489px;height:7.5px;background:#C2C3C9;"></div>
<svg class="a" style="left:775px;top:316.5px;" width="4" height="7" viewBox="0 0 4 7"><path d="M0.5 0 V7 L4 3.5 Z" fill="#707070"/></svg>
<div class="t" id="f35" style="left:801.00px;top:317.00px;font-size:10px;color:#1E1E1E;font-family:'Liberation Sans',sans-serif;letter-spacing:-0.531px;transform-origin:0 0;transform:scaleX(0.8944);">Ln: 363</div>
<div class="t" id="f36" style="left:842.00px;top:317.00px;font-size:10px;color:#1E1E1E;font-family:'Liberation Sans',sans-serif;letter-spacing:-0.488px;transform-origin:0 0;transform:scaleX(0.9110);">Ch: 1</div>
<div class="t" id="f37" style="left:877.00px;top:317.00px;font-size:10px;color:#1E1E1E;font-family:'Liberation Sans',sans-serif;letter-spacing:-1.148px;transform-origin:0 0;transform:scaleX(0.8430);">TABS</div>
<div class="t" id="f38" style="left:912.00px;top:317.00px;font-size:10px;color:#1E1E1E;font-family:'Liberation Sans',sans-serif;letter-spacing:-1.271px;transform-origin:0 0;transform:scaleX(0.8291);">CRLF</div>
<div class="a" style="left:944px;top:75px;width:236px;height:15.5px;background:#3F5189;"></div>
<div class="t" id="f39" style="left:948.00px;top:80.00px;font-size:10px;color:#F1F3FA;font-family:'Liberation Sans',sans-serif;letter-spacing:-0.109px;transform-origin:0 0;transform:none;">Diagnostic Tools</div>
<svg class="a" style="left:1147.5px;top:80.5px;" width="5" height="3" viewBox="0 0 5 3"><path d="M0 0 H5 L2.5 3 Z" fill="#E3E7F3"/></svg>
<svg class="a" style="left:1160.5px;top:77.5px;" width="5" height="9" viewBox="0 0 5 9"><path d="M1 0.5 H4 M1.5 0.5 V5 H3.5 V0.5 M0 5.5 H5 M2.5 5.5 V9" stroke="#E3E7F3" stroke-width="1" fill="none"/></svg>
<svg class="a" style="left:1171.5px;top:78.5px;" width="7" height="7" viewBox="0 0 7 7"><path d="M0.5 0.5 L6.5 6.5 M6.5 0.5 L0.5 6.5" stroke="#E3E7F3" stroke-width="1"/></svg>
<div class="a" style="left:944px;top:90.5px;width:236px;height:21px;background:#CCD5F0;"></div>
<svg class="a" style="left:953px;top:95.5px;" width="11" height="11" viewBox="0 0 11 11"><g transform="translate(5.5 5.5)"><rect x="-1.2" y="-5.4" width="2.4" height="3" fill="#1E1E1E" transform="rotate(0)"/><rect x="-1.2" y="-5.4" width="2.4" height="3" fill="#1E1E1E" transform="rotate(45)"/><rect x="-1.2" y="-5.4" width="2.4" height="3" fill="#1E1E1E" transform="rotate(90)"/><rect x="-1.2" y="-5.4" width="2.4" height="3" fill="#1E1E1E" transform="rotate(135)"/><rect x="-1.2" y="-5.4" width="2.4" height="3" fill="#1E1E1E" transform="rotate(180)"/><rect x="-1.2" y="-5.4" width="2.4" height="3" fill="#1E1E1E" transform="rotate(225)"/><rect x="-1.2" y="-5.4" width="2.4" height="3" fill="#1E1E1E" transform="rotate(270)"/><rect x="-1.2" y="-5.4" width="2.4" height="3" fill="#1E1E1E" transform="rotate(315)"/><circle r="2.9" fill="none" stroke="#1E1E1E" stroke-width="2.2"/><circle r="1.3" fill="#CCD5F0"/></g></svg>
<div class="a" style="left:972px;top:93px;width:1px;height:17px;background:#B4BEDA;"></div>
<svg class="a" style="left:978.5px;top:95.5px;" width="12" height="11" viewBox="0 0 12 11"><path d="M6.5 0.5 H0.5 V10.5 H6.5" stroke="#55607F" stroke-width="1.1" fill="none"/><path d="M3 5.5 H10 M7.5 2.8 L10.3 5.5 L7.5 8.2" stroke="#1F5BA8" stroke-width="1.5" fill="none"/></svg>
<div class="a" style="left:998.5px;top:93px;width:1px;height:17px;background:#B4BEDA;"></div>
<svg class="a" style="left:1004.5px;top:96px;" width="11" height="11" viewBox="0 0 11 11"><circle cx="4" cy="4" r="3.3" fill="#fff" stroke="#2A2A2A" stroke-width="1.1"/><path d="M6.5 6.5 L10 10" stroke="#2A2A2A" stroke-width="1.7"/><path d="M2.5 4 H5.5 M4 2.5 V5.5" stroke="#1F5BA8" stroke-width="1"/></svg>
<svg class="a" style="left:1024.5px;top:96px;" width="11" height="11" viewBox="0 0 11 11"><circle cx="4" cy="4" r="3.3" fill="#fff" stroke="#2A2A2A" stroke-width="1.1"/><path d="M6.5 6.5 L10 10" stroke="#2A2A2A" stroke-width="1.7"/><path d="M2.5 4 H5.5" stroke="#1F5BA8" stroke-width="1"/></svg>
<svg class="a" style="left:1045px;top:95.5px;" width="10" height="11" viewBox="0 0 10 11"><path d="M1 10.5 V6 M3.5 10.5 V4 M6 10.5 V7 M8.5 10.5 V5" stroke="#A0A6B8" stroke-width="1.2"/><path d="M1 2 Q1 0.5 2.5 0.5 Q4 0.5 4 2 Q4 3 2.5 3.5 V4.5" stroke="#A0A6B8" stroke-width="0.9" fill="none"/></svg>
<div class="a" style="left:944px;top:111.5px;width:223px;height:120px;background:#F7F8FC;"></div>
<div class="a" style="left:944px;top:111.5px;width:1px;height:120px;background:#C9CFE0;"></div>
<div class="t" id="f40" style="left:952.50px;top:117.00px;font-size:10px;color:#1E1E1E;font-family:'Liberation Sans',sans-serif;-webkit-text-stroke:0.5px currentColor;letter-spacing:-0.216px;transform-origin:0 0;transform:scaleX(0.9530);">Diagnostics session: 8 seconds</div>
<div class="a" style="left:945px;top:128px;width:222px;height:1px;background:#B9BDC9;"></div>
<div class="a" style="left:945px;top:146px;width:222px;height:1px;background:#B9BDC9;"></div>
<div class="a" style="left:969px;top:129px;width:4px;height:17px;background:#000000;"></div>
<div class="a" style="left:1138.3px;top:129px;width:4px;height:17px;background:#000000;"></div>
<div class="a" style="left:1069px;top:128px;width:1px;height:18px;background:#B9BDC9;"></div>
<div class="a" style="left:992.5px;top:142px;width:1px;height:4px;background:#B9BDC9;"></div>
<div class="a" style="left:1011px;top:142px;width:1px;height:4px;background:#B9BDC9;"></div>
<div class="a" style="left:1030px;top:142px;width:1px;height:4px;background:#B9BDC9;"></div>
<div class="a" style="left:1049.5px;top:142px;width:1px;height:4px;background:#B9BDC9;"></div>
<div class="a" style="left:1088px;top:142px;width:1px;height:4px;background:#B9BDC9;"></div>
<div class="a" style="left:1107px;top:142px;width:1px;height:4px;background:#B9BDC9;"></div>
<div class="a" style="left:1126px;top:142px;width:1px;height:4px;background:#B9BDC9;"></div>
<div class="t" id="f41" style="left:1071.50px;top:132.00px;font-size:10px;color:#1E1E1E;font-family:'Liberation Sans',sans-serif;letter-spacing:-0.906px;transform-origin:0 0;transform:scaleX(0.8734);">10s</div>
<svg class="a" style="left:949px;top:153.5px;" width="6" height="5" viewBox="0 0 6 5"><path d="M5.5 0 V5 H0 Z" fill="#404040"/></svg>
<div class="t" id="f42" style="left:957.70px;top:151.00px;font-size:10px;color:#1E1E1E;font-family:'Liberation Sans',sans-serif;-webkit-text-stroke:0.5px currentColor;letter-spacing:-0.408px;transform-origin:0 0;transform:scaleX(0.9286);">Events</div>
<div class="a" style="left:959px;top:167px;width:2.3px;height:6.5px;background:#1E1E1E;"></div>
<div class="a" style="left:963px;top:167px;width:2.3px;height:6.5px;background:#1E1E1E;"></div>
<div class="a" style="left:972px;top:162.4px;width:166.6px;height:17px;background:#FBFBFD;border:1px solid #A9ADB8"></div>
<div class="a" style="left:1069px;top:162.4px;width:1px;height:17px;background:#A9ADB8;"></div>
<svg class="a" style="left:949px;top:187.5px;" width="6" height="5" viewBox="0 0 6 5"><path d="M5.5 0 V5 H0 Z" fill="#404040"/></svg>
<div class="t" id="f43" style="left:957.70px;top:186.00px;font-size:10px;color:#1E1E1E;font-family:'Liberation Sans',sans-serif;-webkit-text-stroke:0.5px currentColor;letter-spacing:-0.151px;transform-origin:0 0;transform:scaleX(0.9718);">Process Memory (MB)</div>
<svg class="a" style="left:1066px;top:185px;" width="8" height="7" viewBox="0 0 8 7"><path d="M0 0 H8 L4 7 Z" fill="#1672C8"/></svg>
<div class="t" id="f44" style="left:1076.00px;top:185.00px;font-size:10px;color:#1E1E1E;font-family:'Liberation Sans',sans-serif;letter-spacing:0.250px;transform-origin:0 0;transform:scaleX(1.0667);width:3.5px;overflow:hidden">S</div>
<svg class="a" style="left:1087px;top:185px;" width="8" height="8" viewBox="0 0 8 8"><circle cx="4" cy="4" r="3.9" fill="#7FB2D2"/></svg>
<div class="t" id="f45" style="left:1098.00px;top:185.00px;font-size:10px;color:#1E1E1E;font-family:'Liberation Sans',sans-serif;letter-spacing:-0.286px;transform-origin:0 0;transform:scaleX(0.9332);">P...</div>
<div class="t" id="f46" style="left:954.00px;top:202.00px;font-size:10px;color:#1E1E1E;font-family:'Liberation Sans',sans-serif;letter-spacing:-0.547px;transform-origin:0 0;transform:scaleX(0.9299);">483</div>
<div class="t" id="f47" style="left:1142.50px;top:202.00px;font-size:10px;color:#1E1E1E;font-family:'Liberation Sans',sans-serif;letter-spacing:-0.422px;transform-origin:0 0;transform:scaleX(0.9467);">483</div>
<div class="a" style="left:972px;top:198.5px;width:166.6px;height:34px;background:#FBFBFD;border:1px solid #A9ADB8;border-bottom:none"></div>
<div class="a" style="left:1069px;top:198.5px;width:1px;height:33px;background:#A9ADB8;"></div>
<svg class="a" style="left:983px;top:202px;" width="68" height="30" viewBox="0 0 68 30"><path d="M0 30 L1.5 13 Q3.5 6 12 4.6 Q24 2.2 35 1.8 L39.5 4.8 Q42 3.6 67 3.6 V30 Z" fill="#9EC4D9"/></svg>
<div class="a" style="left:1167px;top:90.5px;width:13px;height:141.5px;background:#E8E8EC;"></div>
<svg class="a" style="left:1169px;top:104px;" width="9" height="6" viewBox="0 0 9 6"><path d="M0.8 5 L4.5 1 L8.2 5" stroke="#6D6D6D" stroke-width="1.3" fill="none"/></svg>
<div class="a" style="left:1168px;top:117.6px;width:11px;height:48.5px;background:#C2C3C9;"></div>
<svg class="a" style="left:1169px;top:211px;" width="9" height="6" viewBox="0 0 9 6"><path d="M0.8 1 L4.5 5 L8.2 1" stroke="#6D6D6D" stroke-width="1.3" fill="none"/></svg>
<div class="a" style="left:944px;top:231.5px;width:236px;height:2px;background:#D6D8E0;"></div>
<div class="a" style="left:944px;top:233.5px;width:236px;height:18px;background:#FFFFFF;"></div>
<div class="a" style="left:948px;top:235.5px;width:47.5px;height:15.5px;background:#E3E8F6;"></div>
<div class="t" id="f48" style="left:951.50px;top:241.00px;font-size:10px;color:#1E1E1E;font-family:'Liberation Sans',sans-serif;letter-spacing:-0.150px;transform-origin:0 0;transform:scaleX(0.9786);">Summary</div>
<div class="t" id="f49" style="left:1000.00px;top:241.00px;font-size:10px;color:#1E1E1E;font-family:'Liberation Sans',sans-serif;letter-spacing:-0.358px;transform-origin:0 0;transform:scaleX(0.9379);">Events</div>
<div class="t" id="f50" style="left:1036.00px;top:241.00px;font-size:10px;color:#1E1E1E;font-family:'Liberation Sans',sans-serif;letter-spacing:-0.310px;transform-origin:0 0;transform:scaleX(0.9471);">Memory Usage</div>
<div class="t" id="f51" style="left:1108.00px;top:241.00px;font-size:10px;color:#1E1E1E;font-family:'Liberation Sans',sans-serif;letter-spacing:-0.551px;transform-origin:0 0;transform:scaleX(0.9090);">CPU Usage</div>
<div class="a" style="left:944px;top:251px;width:223px;height:75.5px;background:#FFFFFF;"></div>
<div class="a" style="left:944px;top:251.5px;width:223px;height:18px;background:#F5F5F7;"></div>
<div class="t" id="f52" style="left:951.50px;top:258.00px;font-size:10px;color:#1E1E1E;font-family:'Liberation Sans',sans-serif;-webkit-text-stroke:0.5px currentColor;letter-spacing:-0.358px;transform-origin:0 0;transform:scaleX(0.9379);">Events</div>
<div class="a" style="left:944px;top:269.5px;width:223px;height:1px;background:#E0E0E4;"></div>
<svg class="a" style="left:956px;top:278px;" width="9" height="5" viewBox="0 0 9 5"><path d="M0.5 2.5 Q0.5 0.5 2.5 0.5 H3.5 M5.5 4.5 H6.5 Q8.5 4.5 8.5 2.5 Q8.5 0.5 6.5 0.5 H5.5 M3.5 4.5 H2.5 Q0.5 4.5 0.5 2.5 M3 2.5 H6" stroke="#8A8A8A" stroke-width="0.9" fill="none"/></svg>
<div class="t" id="f53" style="left:972.00px;top:278.00px;font-size:10px;color:#1E1E1E;font-family:'Liberation Sans',sans-serif;letter-spacing:-0.259px;transform-origin:0 0;transform:scaleX(0.9441);">Show Events (0 of 0)</div>
<div class="a" style="left:944px;top:291.5px;width:223px;height:1px;background:#E0E0E4;"></div>
<div class="a" style="left:944px;top:292.5px;width:223px;height:18px;background:#F5F5F7;"></div>
<div class="t" id="f54" style="left:951.50px;top:298.00px;font-size:10px;color:#1E1E1E;font-family:'Liberation Sans',sans-serif;-webkit-text-stroke:0.5px currentColor;letter-spacing:-0.264px;transform-origin:0 0;transform:scaleX(0.9552);">Memory Usage</div>
<div class="a" style="left:944px;top:310.5px;width:223px;height:1px;background:#E0E0E4;"></div>
<svg class="a" style="left:956px;top:318px;" width="9" height="7" viewBox="0 0 9 7"><path d="M0.5 1.5 H2.5 L3.5 0.5 H5.5 L6.5 1.5 H8.5 V6.5 H0.5 Z" fill="#3A3A3A"/><circle cx="4.5" cy="4" r="1.6" fill="#ddd"/></svg>
<div class="t" id="f55" style="left:972.50px;top:319.00px;font-size:10px;color:#8A8A8A;font-family:'Liberation Sans',sans-serif;letter-spacing:-0.382px;transform-origin:0 0;transform:scaleX(0.9255);clip-path:inset(0 0 2px 0)">Take Snapshot</div>
<div class="a" style="left:1167px;top:251px;width:13px;height:75.5px;background:#E8E8EC;"></div>
<svg class="a" style="left:1169px;top:265px;" width="9" height="6" viewBox="0 0 9 6"><path d="M0.8 5 L4.5 1 L8.2 5" stroke="#6D6D6D" stroke-width="1.3" fill="none"/></svg>
<div class="a" style="left:1168px;top:278px;width:11px;height:12px;background:#C2C3C9;"></div>
<svg class="a" style="left:1169px;top:307px;" width="9" height="6" viewBox="0 0 9 6"><path d="M0.8 1 L4.5 5 L8.2 1" stroke="#6D6D6D" stroke-width="1.3" fill="none"/></svg>
<div class="t" id="vt1" style="left:1195px;top:73.5px;font-size:9.5px;color:#F1F3FA;transform-origin:0 0;transform:rotate(90deg);letter-spacing:-0.105px">Solution Explorer</div>
<div class="t" id="vt2" style="left:1195px;top:152.5px;font-size:9.5px;color:#F1F3FA;transform-origin:0 0;transform:rotate(90deg);letter-spacing:-0.198px">Team Explorer</div>
<div class="a" style="left:8px;top:333px;width:740px;height:15.5px;background:#F5CC84;"></div>
<div class="t" id="f56" style="left:12.00px;top:337.00px;font-size:10px;color:#1E1E1E;font-family:'Liberation Sans',sans-serif;letter-spacing:-0.291px;transform-origin:0 0;transform:scaleX(0.9471);">Locals</div>
<svg class="a" style="left:711.5px;top:339.5px;" width="5" height="3" viewBox="0 0 5 3"><path d="M0 0 H5 L2.5 3 Z" fill="#1E1E1E"/></svg>
<svg class="a" style="left:724.5px;top:336.5px;" width="5" height="9" viewBox="0 0 5 9"><path d="M1 0.5 H4 M1.5 0.5 V5 H3.5 V0.5 M0 5.5 H5 M2.5 5.5 V9" stroke="#1E1E1E" stroke-width="1" fill="none"/></svg>
<svg class="a" style="left:736.5px;top:337.5px;" width="7" height="7" viewBox="0 0 7 7"><path d="M0.5 0.5 L6.5 6.5 M6.5 0.5 L0.5 6.5" stroke="#1E1E1E" stroke-width="1"/></svg>
<div class="a" style="left:8px;top:348.5px;width:740px;height:20px;background:#CCD5F0;"></div>
<div class="a" style="left:9px;top:351px;width:172px;height:15px;background:#FBFBFD;"></div>
<div class="t" id="f57" style="left:11.50px;top:356.00px;font-size:10px;color:#6D6D6D;font-family:'Liberation Sans',sans-serif;letter-spacing:-0.310px;transform-origin:0 0;transform:scaleX(0.9330);">Search (Ctrl+E)</div>
<svg class="a" style="left:160.5px;top:353px;" width="10" height="10" viewBox="0 0 10 10"><circle cx="6" cy="4" r="3" fill="none" stroke="#1E1E1E" stroke-width="1.3"/><path d="M3.8 6.2 L0.8 9.2" stroke="#1E1E1E" stroke-width="1.6"/></svg>
<svg class="a" style="left:173.5px;top:356.5px;" width="5" height="3" viewBox="0 0 5 3"><path d="M0 0 H5 L2.5 3 Z" fill="#1E1E1E"/></svg>
<svg class="a" style="left:187px;top:354px;" width="11" height="8" viewBox="0 0 11 8"><path d="M10.5 4 H1.5 M4.5 0.8 L1.2 4 L4.5 7.2" stroke="#A9B0C6" stroke-width="1.2" fill="none"/></svg>
<svg class="a" style="left:204px;top:354px;" width="11" height="8" viewBox="0 0 11 8"><path d="M0.5 4 H9.5 M6.5 0.8 L9.8 4 L6.5 7.2" stroke="#A9B0C6" stroke-width="1.2" fill="none"/></svg>
<div class="t" id="f58" style="left:221.00px;top:356.00px;font-size:10px;color:#8D93A8;font-family:'Liberation Sans',sans-serif;letter-spacing:-0.331px;transform-origin:0 0;transform:scaleX(0.9338);">Search Depth:</div>
<div class="a" style="left:283px;top:351px;width:29px;height:14.5px;background:#D5DCF0;border:1px solid #C3CBE3"></div>
<div class="t" id="f59" style="left:285.50px;top:355.00px;font-size:10px;color:#A9B0C6;font-family:'Liberation Sans',sans-serif;letter-spacing:-0.531px;transform-origin:0 0;transform:scaleX(0.8944);">3</div>
<svg class="a" style="left:304.5px;top:356.5px;" width="5" height="3" viewBox="0 0 5 3"><path d="M0 0 H5 L2.5 3 Z" fill="#A9B0C6"/></svg>
<div class="a" style="left:8px;top:368.5px;width:727.5px;height:337.5px;background:#FFFFFF;"></div>
<div class="a" style="left:8px;top:383.5px;width:727.5px;height:1px;background:#DDE1EC;"></div>
<div class="a" style="left:14px;top:369px;width:1px;height:15px;background:#DDE1EC;"></div>
<div class="a" style="left:254.5px;top:369px;width:1px;height:15px;background:#DDE1EC;"></div>
<div class="a" style="left:615px;top:369px;width:1px;height:15px;background:#DDE1EC;"></div>
<div class="t" id="f60" style="left:19.00px;top:373.00px;font-size:10px;color:#1E1E1E;font-family:'Liberation Sans',sans-serif;letter-spacing:-0.615px;transform-origin:0 0;transform:scaleX(0.9258);">Name</div>
<div class="t" id="f61" style="left:259.00px;top:373.00px;font-size:10px;color:#1E1E1E;font-family:'Liberation Sans',sans-serif;letter-spacing:-0.355px;transform-origin:0 0;transform:scaleX(0.9393);">Value</div>
<div class="t" id="f62" style="left:620.00px;top:373.00px;font-size:10px;color:#1E1E1E;font-family:'Liberation Sans',sans-serif;letter-spacing:-0.365px;transform-origin:0 0;transform:scaleX(0.9469);">Type</div>
<div class="a" style="left:15px;top:396.61px;width:720.5px;height:1px;background:#F2F2F2;"></div>
<div class="a" style="left:254.5px;top:384.5px;width:1px;height:13.11px;background:#EDEDED;"></div>
<div class="a" style="left:615px;top:384.5px;width:1px;height:13.11px;background:#EDEDED;"></div>
<svg class="a" style="left:19px;top:388.0px;" width="4" height="7" viewBox="0 0 4 7"><path d="M0.3 0.3 L3.8 3.5 L0.3 6.7 Z" fill="#404040"/></svg>
<svg class="a" style="left:29px;top:387.0px;" width="9" height="8" viewBox="0 0 9 8"><path d="M0.5 2.5 L5 0.5 L8.5 2 V5.5 L4 7.5 L0.5 6 Z" fill="#1453B8"/><path d="M0.8 2.6 L5 0.8 L8.2 2.1 L4 3.9 Z" fill="#8DB6EA"/></svg>
<div class="t" style="left:44.00px;top:388.00px;font-size:9.5px;color:#1E1E1E;font-family:'Liberation Sans',sans-serif;letter-spacing:-0.2px;-webkit-text-stroke:0.05px currentColor">[Launch Details]</div>
<div class="t" style="left:258.00px;top:388.00px;font-size:9.5px;color:#1E1E1E;font-family:'Liberation Sans',sans-serif;letter-spacing:-0.15px;transform-origin:0 0;transform:scaleX(0.9526);-webkit-text-stroke:0.05px currentColor">{...}</div>
<div class="a" style="left:15px;top:409.72px;width:720.5px;height:1px;background:#F2F2F2;"></div>
<div class="a" style="left:254.5px;top:397.61px;width:1px;height:13.11px;background:#EDEDED;"></div>
<div class="a" style="left:615px;top:397.61px;width:1px;height:13.11px;background:#EDEDED;"></div>
<svg class="a" style="left:19px;top:401.11px;" width="4" height="7" viewBox="0 0 4 7"><path d="M0.3 0.3 L3.8 3.5 L0.3 6.7 Z" fill="#404040"/></svg>
<svg class="a" style="left:29px;top:400.11px;" width="9" height="8" viewBox="0 0 9 8"><path d="M0.5 2.5 L5 0.5 L8.5 2 V5.5 L4 7.5 L0.5 6 Z" fill="#1453B8"/><path d="M0.8 2.6 L5 0.8 L8.2 2.1 L4 3.9 Z" fill="#8DB6EA"/></svg>
<div class="t" style="left:44.00px;top:401.00px;font-size:9.5px;color:#1E1E1E;font-family:'Liberation Sans',sans-serif;letter-spacing:-0.2px;-webkit-text-stroke:0.05px currentColor">aabb</div>
<div class="t" style="left:258.00px;top:401.00px;font-size:9.5px;color:#1E1E1E;font-family:'Liberation Sans',sans-serif;letter-spacing:-0.15px;transform-origin:0 0;transform:scaleX(0.9526);-webkit-text-stroke:0.05px currentColor">0x0 {  { { __b_6float4 = { x = 0.00000000, y = 0.00000000, z = 0.00000000, w = 0.00000000...</div>
<div class="t" style="left:619.50px;top:401.00px;font-size:9.5px;color:#1E1E1E;font-family:'Liberation Sans',sans-serif;letter-spacing:-0.15px;transform-origin:0 0;transform:scaleX(0.9526);-webkit-text-stroke:0.05px currentColor">__shared__ cuVector [256] [2]</div>
<div class="a" style="left:15px;top:422.83000000000004px;width:720.5px;height:1px;background:#F2F2F2;"></div>
<div class="a" style="left:254.5px;top:410.72px;width:1px;height:13.11px;background:#EDEDED;"></div>
<div class="a" style="left:615px;top:410.72px;width:1px;height:13.11px;background:#EDEDED;"></div>
<svg class="a" style="left:29px;top:413.22px;" width="9" height="8" viewBox="0 0 9 8"><path d="M0.5 2.5 L5 0.5 L8.5 2 V5.5 L4 7.5 L0.5 6 Z" fill="#1453B8"/><path d="M0.8 2.6 L5 0.8 L8.2 2.1 L4 3.9 Z" fill="#8DB6EA"/></svg>
<div class="t" style="left:44.00px;top:414.00px;font-size:9.5px;color:#1E1E1E;font-family:'Liberation Sans',sans-serif;letter-spacing:-0.2px;-webkit-text-stroke:0.05px currentColor">this</div>
<div class="t" style="left:258.00px;top:414.00px;font-size:9.5px;color:#1E1E1E;font-family:'Liberation Sans',sans-serif;letter-spacing:-0.15px;transform-origin:0 0;transform:scaleX(0.9526);-webkit-text-stroke:0.05px currentColor">0x14655fffdb8 { ??? }</div>
<div class="t" style="left:619.50px;top:414.00px;font-size:9.5px;color:#1E1E1E;font-family:'Liberation Sans',sans-serif;letter-spacing:-0.15px;transform-origin:0 0;transform:scaleX(0.9526);-webkit-text-stroke:0.05px currentColor">ndWorldSceneCuda::InitB...</div>
<div class="a" style="left:15px;top:435.94px;width:720.5px;height:1px;background:#F2F2F2;"></div>
<div class="a" style="left:254.5px;top:423.83px;width:1px;height:13.11px;background:#EDEDED;"></div>
<div class="a" style="left:615px;top:423.83px;width:1px;height:13.11px;background:#EDEDED;"></div>
<div class="a" style="left:28px;top:423.63px;width:707.5px;height:13.11px;background:#1874D5;"></div>
<div class="a" style="left:254.5px;top:423.83px;width:1px;height:13.11px;background:#8AB9EE;"></div>
<div class="a" style="left:615px;top:423.83px;width:1px;height:13.11px;background:#8AB9EE;"></div>
<div class="a" style="left:8px;top:423.63px;width:20.5px;height:13.11px;background:transparent;border:1px dotted #606060;border-right:none"></div>
<svg class="a" style="left:19px;top:427.83px;" width="5" height="5" viewBox="0 0 5 5"><path d="M4.8 0 V4.8 H0 Z" fill="#1E1E1E"/></svg>
<svg class="a" style="left:29px;top:426.33px;" width="9" height="8" viewBox="0 0 9 8"><path d="M0.5 2.5 L5 0.5 L8.5 2 V5.5 L4 7.5 L0.5 6 Z" fill="#D7E6F7"/><path d="M0.5 2.5 L4 4 L8.5 2 M4 4 V7.5" stroke="#9FC0E6" stroke-width="0.8" fill="none"/></svg>
<div class="t" style="left:44.00px;top:427.00px;font-size:9.5px;color:#FFFFFF;font-family:'Liberation Sans',sans-serif;letter-spacing:-0.2px;-webkit-text-stroke:0.05px currentColor">body</div>
<div class="t" style="left:258.00px;top:427.00px;font-size:9.5px;color:#FFFFFF;font-family:'Liberation Sans',sans-serif;letter-spacing:-0.15px;transform-origin:0 0;transform:scaleX(0.9526);-webkit-text-stroke:0.05px currentColor">0xb06002600 { { m_rotation = { __b_8cuVector = { __b_6float4 = { x = 0.72289401, y = -0...</div>
<div class="t" style="left:619.50px;top:427.00px;font-size:9.5px;color:#FFFFFF;font-family:'Liberation Sans',sans-serif;letter-spacing:-0.15px;transform-origin:0 0;transform:scaleX(0.9526);-webkit-text-stroke:0.05px currentColor">cuBodyProxy*</div>
<div class="a" style="left:15px;top:449.05px;width:720.5px;height:1px;background:#F2F2F2;"></div>
<div class="a" style="left:254.5px;top:436.94px;width:1px;height:13.11px;background:#EDEDED;"></div>
<div class="a" style="left:615px;top:436.94px;width:1px;height:13.11px;background:#EDEDED;"></div>
<svg class="a" style="left:33px;top:440.44px;" width="4" height="7" viewBox="0 0 4 7"><path d="M0.3 0.3 L3.8 3.5 L0.3 6.7 Z" fill="#404040"/></svg>
<svg class="a" style="left:42px;top:439.44px;" width="9" height="8" viewBox="0 0 9 8"><path d="M0.5 2.5 L5 0.5 L8.5 2 V5.5 L4 7.5 L0.5 6 Z" fill="#1453B8"/><path d="M0.8 2.6 L5 0.8 L8.2 2.1 L4 3.9 Z" fill="#8DB6EA"/></svg>
<div class="t" style="left:57.00px;top:440.00px;font-size:9.5px;color:#1E1E1E;font-family:'Liberation Sans',sans-serif;letter-spacing:-0.2px;-webkit-text-stroke:0.05px currentColor">m_rotation</div>
<div class="t" style="left:258.00px;top:440.00px;font-size:9.5px;color:#1E1E1E;font-family:'Liberation Sans',sans-serif;letter-spacing:-0.15px;transform-origin:0 0;transform:scaleX(0.9526);-webkit-text-stroke:0.05px currentColor">{ __b_8cuVector = { __b_6float4 = { x = 0.72289401, y = -0.59613353, z = -0.02035216, w ...</div>
<div class="t" style="left:619.50px;top:440.00px;font-size:9.5px;color:#1E1E1E;font-family:'Liberation Sans',sans-serif;letter-spacing:-0.15px;transform-origin:0 0;transform:scaleX(0.9526);-webkit-text-stroke:0.05px currentColor">cuQuat</div>
<div class="a" style="left:15px;top:462.16px;width:720.5px;height:1px;background:#F2F2F2;"></div>
<div class="a" style="left:254.5px;top:450.05px;width:1px;height:13.11px;background:#EDEDED;"></div>
<div class="a" style="left:615px;top:450.05px;width:1px;height:13.11px;background:#EDEDED;"></div>
<svg class="a" style="left:33px;top:453.55px;" width="4" height="7" viewBox="0 0 4 7"><path d="M0.3 0.3 L3.8 3.5 L0.3 6.7 Z" fill="#404040"/></svg>
<svg class="a" style="left:42px;top:452.55px;" width="9" height="8" viewBox="0 0 9 8"><path d="M0.5 2.5 L5 0.5 L8.5 2 V5.5 L4 7.5 L0.5 6 Z" fill="#1453B8"/><path d="M0.8 2.6 L5 0.8 L8.2 2.1 L4 3.9 Z" fill="#8DB6EA"/></svg>
<div class="t" style="left:57.00px;top:453.00px;font-size:9.5px;color:#1E1E1E;font-family:'Liberation Sans',sans-serif;letter-spacing:-0.2px;-webkit-text-stroke:0.05px currentColor">m_posit</div>
<div class="t" style="left:258.00px;top:453.00px;font-size:9.5px;color:#1E1E1E;font-family:'Liberation Sans',sans-serif;letter-spacing:-0.15px;transform-origin:0 0;transform:scaleX(0.9526);-webkit-text-stroke:0.05px currentColor">{ __b_6float4 = { x = -60.0000000, y = -54.0000000, z = -55.0000000, w = 1.00000000 } }</div>
<div class="t" style="left:619.50px;top:453.00px;font-size:9.5px;color:#1E1E1E;font-family:'Liberation Sans',sans-serif;letter-spacing:-0.15px;transform-origin:0 0;transform:scaleX(0.9526);-webkit-text-stroke:0.05px currentColor">cuVector</div>
<div class="a" style="left:15px;top:475.27px;width:720.5px;height:1px;background:#F2F2F2;"></div>
<div class="a" style="left:254.5px;top:463.15999999999997px;width:1px;height:13.11px;background:#EDEDED;"></div>
<div class="a" style="left:615px;top:463.15999999999997px;width:1px;height:13.11px;background:#EDEDED;"></div>
<svg class="a" style="left:33px;top:466.65999999999997px;" width="4" height="7" viewBox="0 0 4 7"><path d="M0.3 0.3 L3.8 3.5 L0.3 6.7 Z" fill="#404040"/></svg>
<svg class="a" style="left:42px;top:465.65999999999997px;" width="9" height="8" viewBox="0 0 9 8"><path d="M0.5 2.5 L5 0.5 L8.5 2 V5.5 L4 7.5 L0.5 6 Z" fill="#1453B8"/><path d="M0.8 2.6 L5 0.8 L8.2 2.1 L4 3.9 Z" fill="#8DB6EA"/></svg>
<div class="t" style="left:57.00px;top:466.00px;font-size:9.5px;color:#1E1E1E;font-family:'Liberation Sans',sans-serif;letter-spacing:-0.2px;-webkit-text-stroke:0.05px currentColor">m_veloc</div>
<div class="t" style="left:258.00px;top:466.00px;font-size:9.5px;color:#1E1E1E;font-family:'Liberation Sans',sans-serif;letter-spacing:-0.15px;transform-origin:0 0;transform:scaleX(0.9526);-webkit-text-stroke:0.05px currentColor">{ __b_6float4 = { x = 0.00000000, y = 0.00000000, z = 0.00000000, w = 0.00000000 } }</div>
<div class="t" style="left:619.50px;top:466.00px;font-size:9.5px;color:#1E1E1E;font-family:'Liberation Sans',sans-serif;letter-spacing:-0.15px;transform-origin:0 0;transform:scaleX(0.9526);-webkit-text-stroke:0.05px currentColor">cuVector</div>
<div class="a" style="left:15px;top:488.38px;width:720.5px;height:1px;background:#F2F2F2;"></div>
<div class="a" style="left:254.5px;top:476.27px;width:1px;height:13.11px;background:#EDEDED;"></div>
<div class="a" style="left:615px;top:476.27px;width:1px;height:13.11px;background:#EDEDED;"></div>
<svg class="a" style="left:33px;top:479.77px;" width="4" height="7" viewBox="0 0 4 7"><path d="M0.3 0.3 L3.8 3.5 L0.3 6.7 Z" fill="#404040"/></svg>
<svg class="a" style="left:42px;top:478.77px;" width="9" height="8" viewBox="0 0 9 8"><path d="M0.5 2.5 L5 0.5 L8.5 2 V5.5 L4 7.5 L0.5 6 Z" fill="#1453B8"/><path d="M0.8 2.6 L5 0.8 L8.2 2.1 L4 3.9 Z" fill="#8DB6EA"/></svg>
<div class="t" style="left:57.00px;top:479.00px;font-size:9.5px;color:#1E1E1E;font-family:'Liberation Sans',sans-serif;letter-spacing:-0.2px;-webkit-text-stroke:0.05px currentColor">m_omega</div>
<div class="t" style="left:258.00px;top:479.00px;font-size:9.5px;color:#1E1E1E;font-family:'Liberation Sans',sans-serif;letter-spacing:-0.15px;transform-origin:0 0;transform:scaleX(0.9526);-webkit-text-stroke:0.05px currentColor">{ __b_6float4 = { x = 0.18581879, y = -1.85931003, z = -0.00353743, w = 0.00000000 } }</div>
<div class="t" style="left:619.50px;top:479.00px;font-size:9.5px;color:#1E1E1E;font-family:'Liberation Sans',sans-serif;letter-spacing:-0.15px;transform-origin:0 0;transform:scaleX(0.9526);-webkit-text-stroke:0.05px currentColor">cuVector</div>
<div class="a" style="left:15px;top:501.49px;width:720.5px;height:1px;background:#F2F2F2;"></div>
<div class="a" style="left:254.5px;top:489.38px;width:1px;height:13.11px;background:#EDEDED;"></div>
<div class="a" style="left:615px;top:489.38px;width:1px;height:13.11px;background:#EDEDED;"></div>
<svg class="a" style="left:33px;top:492.88px;" width="4" height="7" viewBox="0 0 4 7"><path d="M0.3 0.3 L3.8 3.5 L0.3 6.7 Z" fill="#404040"/></svg>
<svg class="a" style="left:42px;top:491.88px;" width="9" height="8" viewBox="0 0 9 8"><path d="M0.5 2.5 L5 0.5 L8.5 2 V5.5 L4 7.5 L0.5 6 Z" fill="#1453B8"/><path d="M0.8 2.6 L5 0.8 L8.2 2.1 L4 3.9 Z" fill="#8DB6EA"/></svg>
<div class="t" style="left:57.00px;top:492.00px;font-size:9.5px;color:#1E1E1E;font-family:'Liberation Sans',sans-serif;letter-spacing:-0.2px;-webkit-text-stroke:0.05px currentColor">m_globalSphapeRotation</div>
<div class="t" style="left:258.00px;top:492.00px;font-size:9.5px;color:#1E1E1E;font-family:'Liberation Sans',sans-serif;letter-spacing:-0.15px;transform-origin:0 0;transform:scaleX(0.9526);-webkit-text-stroke:0.05px currentColor">{ __b_8cuVector = { __b_6float4 = { x = 0.72289401, y = -0.59613353, z = -0.02035216, w ...</div>
<div class="t" style="left:619.50px;top:492.00px;font-size:9.5px;color:#1E1E1E;font-family:'Liberation Sans',sans-serif;letter-spacing:-0.15px;transform-origin:0 0;transform:scaleX(0.9526);-webkit-text-stroke:0.05px currentColor">cuQuat</div>
<div class="a" style="left:15px;top:514.6px;width:720.5px;height:1px;background:#F2F2F2;"></div>
<div class="a" style="left:254.5px;top:502.49px;width:1px;height:13.11px;background:#EDEDED;"></div>
<div class="a" style="left:615px;top:502.49px;width:1px;height:13.11px;background:#EDEDED;"></div>
<svg class="a" style="left:33px;top:505.99px;" width="4" height="7" viewBox="0 0 4 7"><path d="M0.3 0.3 L3.8 3.5 L0.3 6.7 Z" fill="#404040"/></svg>
<svg class="a" style="left:42px;top:504.99px;" width="9" height="8" viewBox="0 0 9 8"><path d="M0.5 2.5 L5 0.5 L8.5 2 V5.5 L4 7.5 L0.5 6 Z" fill="#1453B8"/><path d="M0.8 2.6 L5 0.8 L8.2 2.1 L4 3.9 Z" fill="#8DB6EA"/></svg>
<div class="t" style="left:57.00px;top:506.00px;font-size:9.5px;color:#1E1E1E;font-family:'Liberation Sans',sans-serif;letter-spacing:-0.2px;-webkit-text-stroke:0.05px currentColor">m_globalSphapePosition</div>
<div class="t" style="left:258.00px;top:506.00px;font-size:9.5px;color:#1E1E1E;font-family:'Liberation Sans',sans-serif;letter-spacing:-0.15px;transform-origin:0 0;transform:scaleX(0.9526);-webkit-text-stroke:0.05px currentColor">{ __b_6float4 = { x = -431602080, y = -431602080, z = -431602080, w = -431602080 } }</div>
<div class="t" style="left:619.50px;top:506.00px;font-size:9.5px;color:#1E1E1E;font-family:'Liberation Sans',sans-serif;letter-spacing:-0.15px;transform-origin:0 0;transform:scaleX(0.9526);-webkit-text-stroke:0.05px currentColor">cuVector</div>
<div class="a" style="left:15px;top:527.71px;width:720.5px;height:1px;background:#F2F2F2;"></div>
<div class="a" style="left:254.5px;top:515.6px;width:1px;height:13.11px;background:#EDEDED;"></div>
<div class="a" style="left:615px;top:515.6px;width:1px;height:13.11px;background:#EDEDED;"></div>
<svg class="a" style="left:33px;top:519.1px;" width="4" height="7" viewBox="0 0 4 7"><path d="M0.3 0.3 L3.8 3.5 L0.3 6.7 Z" fill="#404040"/></svg>
<svg class="a" style="left:42px;top:518.1px;" width="9" height="8" viewBox="0 0 9 8"><path d="M0.5 2.5 L5 0.5 L8.5 2 V5.5 L4 7.5 L0.5 6 Z" fill="#1453B8"/><path d="M0.8 2.6 L5 0.8 L8.2 2.1 L4 3.9 Z" fill="#8DB6EA"/></svg>
<div class="t" style="left:57.00px;top:519.00px;font-size:9.5px;color:#1E1E1E;font-family:'Liberation Sans',sans-serif;letter-spacing:-0.2px;-webkit-text-stroke:0.05px currentColor">m_minAabb</div>
<div class="t" style="left:258.00px;top:519.00px;font-size:9.5px;color:#1E1E1E;font-family:'Liberation Sans',sans-serif;letter-spacing:-0.15px;transform-origin:0 0;transform:scaleX(0.9526);-webkit-text-stroke:0.05px currentColor">{ __b_6float4 = { x = 1.000000e+15, y = 1.000000e+15, z = 1.000000e+15, w = 1.000000e...</div>
<div class="t" style="left:619.50px;top:519.00px;font-size:9.5px;color:#1E1E1E;font-family:'Liberation Sans',sans-serif;letter-spacing:-0.15px;transform-origin:0 0;transform:scaleX(0.9526);-webkit-text-stroke:0.05px currentColor">cuVector</div>
<div class="a" style="left:15px;top:540.82px;width:720.5px;height:1px;background:#F2F2F2;"></div>
<div class="a" style="left:254.5px;top:528.71px;width:1px;height:13.11px;background:#EDEDED;"></div>
<div class="a" style="left:615px;top:528.71px;width:1px;height:13.11px;background:#EDEDED;"></div>
<svg class="a" style="left:33px;top:532.21px;" width="4" height="7" viewBox="0 0 4 7"><path d="M0.3 0.3 L3.8 3.5 L0.3 6.7 Z" fill="#404040"/></svg>
<svg class="a" style="left:42px;top:531.21px;" width="9" height="8" viewBox="0 0 9 8"><path d="M0.5 2.5 L5 0.5 L8.5 2 V5.5 L4 7.5 L0.5 6 Z" fill="#1453B8"/><path d="M0.8 2.6 L5 0.8 L8.2 2.1 L4 3.9 Z" fill="#8DB6EA"/></svg>
<div class="t" style="left:57.00px;top:532.00px;font-size:9.5px;color:#1E1E1E;font-family:'Liberation Sans',sans-serif;letter-spacing:-0.2px;-webkit-text-stroke:0.05px currentColor">m_maxAabb</div>
<div class="t" style="left:258.00px;top:532.00px;font-size:9.5px;color:#1E1E1E;font-family:'Liberation Sans',sans-serif;letter-spacing:-0.15px;transform-origin:0 0;transform:scaleX(0.9526);-webkit-text-stroke:0.05px currentColor">{ __b_6float4 = { x = -1.000000e+15, y = -1.000000e+15, z = -1.000000e+15, w = -1.0000...</div>
<div class="t" style="left:619.50px;top:532.00px;font-size:9.5px;color:#1E1E1E;font-family:'Liberation Sans',sans-serif;letter-spacing:-0.15px;transform-origin:0 0;transform:scaleX(0.9526);-webkit-text-stroke:0.05px currentColor">cuVector</div>
<div class="a" style="left:15px;top:553.93px;width:720.5px;height:1px;background:#F2F2F2;"></div>
<div class="a" style="left:254.5px;top:541.8199999999999px;width:1px;height:13.11px;background:#EDEDED;"></div>
<div class="a" style="left:615px;top:541.8199999999999px;width:1px;height:13.11px;background:#EDEDED;"></div>
<svg class="a" style="left:33px;top:545.3199999999999px;" width="4" height="7" viewBox="0 0 4 7"><path d="M0.3 0.3 L3.8 3.5 L0.3 6.7 Z" fill="#404040"/></svg>
<svg class="a" style="left:42px;top:544.3199999999999px;" width="9" height="8" viewBox="0 0 9 8"><path d="M0.5 2.5 L5 0.5 L8.5 2 V5.5 L4 7.5 L0.5 6 Z" fill="#1453B8"/><path d="M0.8 2.6 L5 0.8 L8.2 2.1 L4 3.9 Z" fill="#8DB6EA"/></svg>
<div class="t" style="left:57.00px;top:545.00px;font-size:9.5px;color:#1E1E1E;font-family:'Liberation Sans',sans-serif;letter-spacing:-0.2px;-webkit-text-stroke:0.05px currentColor">m_mass</div>
<div class="t" style="left:258.00px;top:545.00px;font-size:9.5px;color:#1E1E1E;font-family:'Liberation Sans',sans-serif;letter-spacing:-0.15px;transform-origin:0 0;transform:scaleX(0.9526);-webkit-text-stroke:0.05px currentColor">{ __b_6float4 = { x = 3.74166679, y = 1.24166667, z = 4.16666698, w = 10.0000000 } }</div>
<div class="t" style="left:619.50px;top:545.00px;font-size:9.5px;color:#1E1E1E;font-family:'Liberation Sans',sans-serif;letter-spacing:-0.15px;transform-origin:0 0;transform:scaleX(0.9526);-webkit-text-stroke:0.05px currentColor">cuVector</div>
<div class="a" style="left:15px;top:567.0400000000001px;width:720.5px;height:1px;background:#F2F2F2;"></div>
<div class="a" style="left:254.5px;top:554.9300000000001px;width:1px;height:13.11px;background:#EDEDED;"></div>
<div class="a" style="left:615px;top:554.9300000000001px;width:1px;height:13.11px;background:#EDEDED;"></div>
<svg class="a" style="left:33px;top:558.4300000000001px;" width="4" height="7" viewBox="0 0 4 7"><path d="M0.3 0.3 L3.8 3.5 L0.3 6.7 Z" fill="#404040"/></svg>
<svg class="a" style="left:42px;top:557.4300000000001px;" width="9" height="8" viewBox="0 0 9 8"><path d="M0.5 2.5 L5 0.5 L8.5 2 V5.5 L4 7.5 L0.5 6 Z" fill="#1453B8"/><path d="M0.8 2.6 L5 0.8 L8.2 2.1 L4 3.9 Z" fill="#8DB6EA"/></svg>
<div class="t" style="left:57.00px;top:558.00px;font-size:9.5px;color:#1E1E1E;font-family:'Liberation Sans',sans-serif;letter-spacing:-0.2px;-webkit-text-stroke:0.05px currentColor">m_dampCoef</div>
<div class="t" style="left:258.00px;top:558.00px;font-size:9.5px;color:#1E1E1E;font-family:'Liberation Sans',sans-serif;letter-spacing:-0.15px;transform-origin:0 0;transform:scaleX(0.9526);-webkit-text-stroke:0.05px currentColor">{ __b_6float4 = { x = 1.00000000, y = 1.00000000, z = 1.00000000, w = 1.00000000 } }</div>
<div class="t" style="left:619.50px;top:558.00px;font-size:9.5px;color:#1E1E1E;font-family:'Liberation Sans',sans-serif;letter-spacing:-0.15px;transform-origin:0 0;transform:scaleX(0.9526);-webkit-text-stroke:0.05px currentColor">cuVector</div>
<div class="a" style="left:15px;top:580.15px;width:720.5px;height:1px;background:#F2F2F2;"></div>
<div class="a" style="left:254.5px;top:568.04px;width:1px;height:13.11px;background:#EDEDED;"></div>
<div class="a" style="left:615px;top:568.04px;width:1px;height:13.11px;background:#EDEDED;"></div>
<svg class="a" style="left:33px;top:571.54px;" width="4" height="7" viewBox="0 0 4 7"><path d="M0.3 0.3 L3.8 3.5 L0.3 6.7 Z" fill="#404040"/></svg>
<svg class="a" style="left:42px;top:570.54px;" width="9" height="8" viewBox="0 0 9 8"><path d="M0.5 2.5 L5 0.5 L8.5 2 V5.5 L4 7.5 L0.5 6 Z" fill="#1453B8"/><path d="M0.8 2.6 L5 0.8 L8.2 2.1 L4 3.9 Z" fill="#8DB6EA"/></svg>
<div class="t" style="left:57.00px;top:571.00px;font-size:9.5px;color:#1E1E1E;font-family:'Liberation Sans',sans-serif;letter-spacing:-0.2px;-webkit-text-stroke:0.05px currentColor">m_invIntertia</div>
<div class="t" style="left:258.00px;top:571.00px;font-size:9.5px;color:#1E1E1E;font-family:'Liberation Sans',sans-serif;letter-spacing:-0.15px;transform-origin:0 0;transform:scaleX(0.9526);-webkit-text-stroke:0.05px currentColor">{ __b_6float4 = { x = 0.26726058, y = 0.80536914, z = 0.23999998, w = 0.00000000 } }</div>
<div class="t" style="left:619.50px;top:571.00px;font-size:9.5px;color:#1E1E1E;font-family:'Liberation Sans',sans-serif;letter-spacing:-0.15px;transform-origin:0 0;transform:scaleX(0.9526);-webkit-text-stroke:0.05px currentColor">cuVector</div>
<div class="a" style="left:15px;top:593.26px;width:720.5px;height:1px;background:#F2F2F2;"></div>
<div class="a" style="left:254.5px;top:581.15px;width:1px;height:13.11px;background:#EDEDED;"></div>
<div class="a" style="left:615px;top:581.15px;width:1px;height:13.11px;background:#EDEDED;"></div>
<svg class="a" style="left:33px;top:584.65px;" width="4" height="7" viewBox="0 0 4 7"><path d="M0.3 0.3 L3.8 3.5 L0.3 6.7 Z" fill="#404040"/></svg>
<svg class="a" style="left:42px;top:583.65px;" width="9" height="8" viewBox="0 0 9 8"><path d="M0.5 2.5 L5 0.5 L8.5 2 V5.5 L4 7.5 L0.5 6 Z" fill="#1453B8"/><path d="M0.8 2.6 L5 0.8 L8.2 2.1 L4 3.9 Z" fill="#8DB6EA"/></svg>
<div class="t" style="left:57.00px;top:584.00px;font-size:9.5px;color:#1E1E1E;font-family:'Liberation Sans',sans-serif;letter-spacing:-0.2px;-webkit-text-stroke:0.05px currentColor">m_obbSize</div>
<div class="t" style="left:258.00px;top:584.00px;font-size:9.5px;color:#1E1E1E;font-family:'Liberation Sans',sans-serif;letter-spacing:-0.15px;transform-origin:0 0;transform:scaleX(0.9526);-webkit-text-stroke:0.05px currentColor">{ __b_6float4 = { x = 0.50000000, y = 1.00000000, z = 0.34999999, w = 0.00000000 } }</div>
<div class="t" style="left:619.50px;top:584.00px;font-size:9.5px;color:#1E1E1E;font-family:'Liberation Sans',sans-serif;letter-spacing:-0.15px;transform-origin:0 0;transform:scaleX(0.9526);-webkit-text-stroke:0.05px currentColor">cuVector</div>
<div class="a" style="left:15px;top:606.37px;width:720.5px;height:1px;background:#F2F2F2;"></div>
<div class="a" style="left:254.5px;top:594.26px;width:1px;height:13.11px;background:#EDEDED;"></div>
<div class="a" style="left:615px;top:594.26px;width:1px;height:13.11px;background:#EDEDED;"></div>
<svg class="a" style="left:33px;top:597.76px;" width="4" height="7" viewBox="0 0 4 7"><path d="M0.3 0.3 L3.8 3.5 L0.3 6.7 Z" fill="#404040"/></svg>
<svg class="a" style="left:42px;top:596.76px;" width="9" height="8" viewBox="0 0 9 8"><path d="M0.5 2.5 L5 0.5 L8.5 2 V5.5 L4 7.5 L0.5 6 Z" fill="#1453B8"/><path d="M0.8 2.6 L5 0.8 L8.2 2.1 L4 3.9 Z" fill="#8DB6EA"/></svg>
<div class="t" style="left:57.00px;top:597.00px;font-size:9.5px;color:#1E1E1E;font-family:'Liberation Sans',sans-serif;letter-spacing:-0.2px;-webkit-text-stroke:0.05px currentColor">m_obbOrigin</div>
<div class="t" style="left:258.00px;top:597.00px;font-size:9.5px;color:#1E1E1E;font-family:'Liberation Sans',sans-serif;letter-spacing:-0.15px;transform-origin:0 0;transform:scaleX(0.9526);-webkit-text-stroke:0.05px currentColor">{ __b_6float4 = { x = 0.00000000, y = 0.00000000, z = 0.00000000, w = 0.00000000 } }</div>
<div class="t" style="left:619.50px;top:597.00px;font-size:9.5px;color:#1E1E1E;font-family:'Liberation Sans',sans-serif;letter-spacing:-0.15px;transform-origin:0 0;transform:scaleX(0.9526);-webkit-text-stroke:0.05px currentColor">cuVector</div>
<div class="a" style="left:15px;top:619.48px;width:720.5px;height:1px;background:#F2F2F2;"></div>
<div class="a" style="left:254.5px;top:607.37px;width:1px;height:13.11px;background:#EDEDED;"></div>
<div class="a" style="left:615px;top:607.37px;width:1px;height:13.11px;background:#EDEDED;"></div>
<svg class="a" style="left:33px;top:610.87px;" width="4" height="7" viewBox="0 0 4 7"><path d="M0.3 0.3 L3.8 3.5 L0.3 6.7 Z" fill="#404040"/></svg>
<svg class="a" style="left:42px;top:609.87px;" width="9" height="8" viewBox="0 0 9 8"><path d="M0.5 2.5 L5 0.5 L8.5 2 V5.5 L4 7.5 L0.5 6 Z" fill="#1453B8"/><path d="M0.8 2.6 L5 0.8 L8.2 2.1 L4 3.9 Z" fill="#8DB6EA"/></svg>
<div class="t" style="left:57.00px;top:610.00px;font-size:9.5px;color:#1E1E1E;font-family:'Liberation Sans',sans-serif;letter-spacing:-0.2px;-webkit-text-stroke:0.05px currentColor">m_scale</div>
<div class="t" style="left:258.00px;top:610.00px;font-size:9.5px;color:#1E1E1E;font-family:'Liberation Sans',sans-serif;letter-spacing:-0.15px;transform-origin:0 0;transform:scaleX(0.9526);-webkit-text-stroke:0.05px currentColor">{ __b_6float4 = { x = 1.00000000, y = 1.00000000, z = 1.00000000, w = 0.00000000 } }</div>
<div class="t" style="left:619.50px;top:610.00px;font-size:9.5px;color:#1E1E1E;font-family:'Liberation Sans',sans-serif;letter-spacing:-0.15px;transform-origin:0 0;transform:scaleX(0.9526);-webkit-text-stroke:0.05px currentColor">cuVector</div>
<div class="a" style="left:15px;top:632.59px;width:720.5px;height:1px;background:#F2F2F2;"></div>
<div class="a" style="left:254.5px;top:620.48px;width:1px;height:13.11px;background:#EDEDED;"></div>
<div class="a" style="left:615px;top:620.48px;width:1px;height:13.11px;background:#EDEDED;"></div>
<svg class="a" style="left:33px;top:623.98px;" width="4" height="7" viewBox="0 0 4 7"><path d="M0.3 0.3 L3.8 3.5 L0.3 6.7 Z" fill="#404040"/></svg>
<svg class="a" style="left:42px;top:622.98px;" width="9" height="8" viewBox="0 0 9 8"><path d="M0.5 2.5 L5 0.5 L8.5 2 V5.5 L4 7.5 L0.5 6 Z" fill="#1453B8"/><path d="M0.8 2.6 L5 0.8 L8.2 2.1 L4 3.9 Z" fill="#8DB6EA"/></svg>
<div class="t" style="left:57.00px;top:624.00px;font-size:9.5px;color:#1E1E1E;font-family:'Liberation Sans',sans-serif;letter-spacing:-0.2px;-webkit-text-stroke:0.05px currentColor">m_localPosition</div>
<div class="t" style="left:258.00px;top:624.00px;font-size:9.5px;color:#1E1E1E;font-family:'Liberation Sans',sans-serif;letter-spacing:-0.15px;transform-origin:0 0;transform:scaleX(0.9526);-webkit-text-stroke:0.05px currentColor">{ __b_6float4 = { x = 0.00000000, y = 0.00000000, z = 0.00000000, w = 1.00000000 } }</div>
<div class="t" style="left:619.50px;top:624.00px;font-size:9.5px;color:#1E1E1E;font-family:'Liberation Sans',sans-serif;letter-spacing:-0.15px;transform-origin:0 0;transform:scaleX(0.9526);-webkit-text-stroke:0.05px currentColor">cuVector</div>
<div class="a" style="left:15px;top:645.6999999999999px;width:720.5px;height:1px;background:#F2F2F2;"></div>
<div class="a" style="left:254.5px;top:633.5899999999999px;width:1px;height:13.11px;background:#EDEDED;"></div>
<div class="a" style="left:615px;top:633.5899999999999px;width:1px;height:13.11px;background:#EDEDED;"></div>
<svg class="a" style="left:33px;top:637.0899999999999px;" width="4" height="7" viewBox="0 0 4 7"><path d="M0.3 0.3 L3.8 3.5 L0.3 6.7 Z" fill="#404040"/></svg>
<svg class="a" style="left:42px;top:636.0899999999999px;" width="9" height="8" viewBox="0 0 9 8"><path d="M0.5 2.5 L5 0.5 L8.5 2 V5.5 L4 7.5 L0.5 6 Z" fill="#1453B8"/><path d="M0.8 2.6 L5 0.8 L8.2 2.1 L4 3.9 Z" fill="#8DB6EA"/></svg>
<div class="t" style="left:57.00px;top:637.00px;font-size:9.5px;color:#1E1E1E;font-family:'Liberation Sans',sans-serif;letter-spacing:-0.2px;-webkit-text-stroke:0.05px currentColor">m_localRotation</div>
<div class="t" style="left:258.00px;top:637.00px;font-size:9.5px;color:#1E1E1E;font-family:'Liberation Sans',sans-serif;letter-spacing:-0.15px;transform-origin:0 0;transform:scaleX(0.9526);-webkit-text-stroke:0.05px currentColor">{ __b_8cuVector = { __b_6float4 = { x = 0.00000000, y = 0.00000000, z = 0.00000000, w = ...</div>
<div class="t" style="left:619.50px;top:637.00px;font-size:9.5px;color:#1E1E1E;font-family:'Liberation Sans',sans-serif;letter-spacing:-0.15px;transform-origin:0 0;transform:scaleX(0.9526);-webkit-text-stroke:0.05px currentColor">cuQuat</div>
<div class="a" style="left:15px;top:658.8100000000001px;width:720.5px;height:1px;background:#F2F2F2;"></div>
<div class="a" style="left:254.5px;top:646.7px;width:1px;height:13.11px;background:#EDEDED;"></div>
<div class="a" style="left:615px;top:646.7px;width:1px;height:13.11px;background:#EDEDED;"></div>
<svg class="a" style="left:33px;top:650.2px;" width="4" height="7" viewBox="0 0 4 7"><path d="M0.3 0.3 L3.8 3.5 L0.3 6.7 Z" fill="#404040"/></svg>
<svg class="a" style="left:42px;top:649.2px;" width="9" height="8" viewBox="0 0 9 8"><path d="M0.5 2.5 L5 0.5 L8.5 2 V5.5 L4 7.5 L0.5 6 Z" fill="#1453B8"/><path d="M0.8 2.6 L5 0.8 L8.2 2.1 L4 3.9 Z" fill="#8DB6EA"/></svg>
<div class="t" style="left:57.00px;top:650.00px;font-size:9.5px;color:#1E1E1E;font-family:'Liberation Sans',sans-serif;letter-spacing:-0.2px;-webkit-text-stroke:0.05px currentColor">m_alignRotation</div>
<div class="t" style="left:258.00px;top:650.00px;font-size:9.5px;color:#1E1E1E;font-family:'Liberation Sans',sans-serif;letter-spacing:-0.15px;transform-origin:0 0;transform:scaleX(0.9526);-webkit-text-stroke:0.05px currentColor">{ __b_8cuVector = { __b_6float4 = { x = 0.00000000, y = 0.00000000, z = 0.00000000, w = ...</div>
<div class="t" style="left:619.50px;top:650.00px;font-size:9.5px;color:#1E1E1E;font-family:'Liberation Sans',sans-serif;letter-spacing:-0.15px;transform-origin:0 0;transform:scaleX(0.9526);-webkit-text-stroke:0.05px currentColor">cuQuat</div>
<div class="a" style="left:15px;top:671.92px;width:720.5px;height:1px;background:#F2F2F2;"></div>
<div class="a" style="left:254.5px;top:659.81px;width:1px;height:13.11px;background:#EDEDED;"></div>
<div class="a" style="left:615px;top:659.81px;width:1px;height:13.11px;background:#EDEDED;"></div>
<svg class="a" style="left:33px;top:663.31px;" width="4" height="7" viewBox="0 0 4 7"><path d="M0.3 0.3 L3.8 3.5 L0.3 6.7 Z" fill="#404040"/></svg>
<svg class="a" style="left:42px;top:662.31px;" width="9" height="8" viewBox="0 0 9 8"><path d="M0.5 2.5 L5 0.5 L8.5 2 V5.5 L4 7.5 L0.5 6 Z" fill="#1453B8"/><path d="M0.8 2.6 L5 0.8 L8.2 2.1 L4 3.9 Z" fill="#8DB6EA"/></svg>
<div class="t" style="left:57.00px;top:663.00px;font-size:9.5px;color:#1E1E1E;font-family:'Liberation Sans',sans-serif;letter-spacing:-0.2px;-webkit-text-stroke:0.05px currentColor">m_xxx0</div>
<div class="t" style="left:258.00px;top:663.00px;font-size:9.5px;color:#1E1E1E;font-family:'Liberation Sans',sans-serif;letter-spacing:-0.15px;transform-origin:0 0;transform:scaleX(0.9526);-webkit-text-stroke:0.05px currentColor">{ __b_6float4 = { x = -431602080, y = -431602080, z = -431602080, w = -431602080 } }</div>
<div class="t" style="left:619.50px;top:663.00px;font-size:9.5px;color:#1E1E1E;font-family:'Liberation Sans',sans-serif;letter-spacing:-0.15px;transform-origin:0 0;transform:scaleX(0.9526);-webkit-text-stroke:0.05px currentColor">cuVector</div>
<div class="a" style="left:15px;top:685.03px;width:720.5px;height:1px;background:#F2F2F2;"></div>
<div class="a" style="left:254.5px;top:672.92px;width:1px;height:13.11px;background:#EDEDED;"></div>
<div class="a" style="left:615px;top:672.92px;width:1px;height:13.11px;background:#EDEDED;"></div>
<svg class="a" style="left:33px;top:676.42px;" width="4" height="7" viewBox="0 0 4 7"><path d="M0.3 0.3 L3.8 3.5 L0.3 6.7 Z" fill="#404040"/></svg>
<svg class="a" style="left:42px;top:675.42px;" width="9" height="8" viewBox="0 0 9 8"><path d="M0.5 2.5 L5 0.5 L8.5 2 V5.5 L4 7.5 L0.5 6 Z" fill="#1453B8"/><path d="M0.8 2.6 L5 0.8 L8.2 2.1 L4 3.9 Z" fill="#8DB6EA"/></svg>
<div class="t" style="left:57.00px;top:676.00px;font-size:9.5px;color:#1E1E1E;font-family:'Liberation Sans',sans-serif;letter-spacing:-0.2px;-webkit-text-stroke:0.05px currentColor">m_xxx1</div>
<div class="t" style="left:258.00px;top:676.00px;font-size:9.5px;color:#1E1E1E;font-family:'Liberation Sans',sans-serif;letter-spacing:-0.15px;transform-origin:0 0;transform:scaleX(0.9526);-webkit-text-stroke:0.05px currentColor">{ __b_6float4 = { x = -431602080, y = -431602080, z = -431602080, w = -431602080 } }</div>
<div class="t" style="left:619.50px;top:676.00px;font-size:9.5px;color:#1E1E1E;font-family:'Liberation Sans',sans-serif;letter-spacing:-0.15px;transform-origin:0 0;transform:scaleX(0.9526);-webkit-text-stroke:0.05px currentColor">cuVector</div>
<div class="a" style="left:735.5px;top:368.5px;width:12.5px;height:337.5px;background:#F0F0F2;"></div>
<svg class="a" style="left:738px;top:373px;" width="8" height="5" viewBox="0 0 8 5"><path d="M0.5 4.5 L4 0.8 L7.5 4.5 Z" fill="#C8C8CC"/></svg>
<svg class="a" style="left:738px;top:697px;" width="8" height="5" viewBox="0 0 8 5"><path d="M0.5 0.5 L4 4.2 L7.5 0.5 Z" fill="#C8C8CC"/></svg>
<div class="a" style="left:8px;top:706px;width:32px;height:15px;background:#3F5290;"></div>
<div class="t" id="f63" style="left:12.00px;top:710.00px;font-size:9.5px;color:#E3E7F3;font-family:'Liberation Sans',sans-serif;letter-spacing:0.176px;transform-origin:0 0;transform:none;">Autos</div>
<div class="a" style="left:40px;top:706px;width:34.5px;height:15.5px;background:#FFFFFF;"></div>
<div class="t" id="f64" style="left:44.00px;top:710.00px;font-size:9.5px;color:#1E1E1E;font-family:'Liberation Sans',sans-serif;letter-spacing:-0.147px;transform-origin:0 0;transform:scaleX(0.9725);">Locals</div>
<div class="a" style="left:74.5px;top:706px;width:41.5px;height:15px;background:#3F5290;"></div>
<div class="t" id="f65" style="left:78.50px;top:710.00px;font-size:9.5px;color:#E3E7F3;font-family:'Liberation Sans',sans-serif;letter-spacing:-0.125px;transform-origin:0 0;transform:scaleX(0.9778);">Watch 1</div>
<div class="a" style="left:754px;top:333px;width:426px;height:15.5px;background:#3F5189;"></div>
<div class="t" id="f66" style="left:758.00px;top:337.00px;font-size:10px;color:#F1F3FA;font-family:'Liberation Sans',sans-serif;letter-spacing:-0.334px;transform-origin:0 0;transform:scaleX(0.9284);">Call Stack</div>
<svg class="a" style="left:1143.5px;top:339.5px;" width="5" height="3" viewBox="0 0 5 3"><path d="M0 0 H5 L2.5 3 Z" fill="#E3E7F3"/></svg>
<svg class="a" style="left:1156.5px;top:336.5px;" width="5" height="9" viewBox="0 0 5 9"><path d="M1 0.5 H4 M1.5 0.5 V5 H3.5 V0.5 M0 5.5 H5 M2.5 5.5 V9" stroke="#E3E7F3" stroke-width="1" fill="none"/></svg>
<svg class="a" style="left:1167.5px;top:337.5px;" width="7" height="7" viewBox="0 0 7 7"><path d="M0.5 0.5 L6.5 6.5 M6.5 0.5 L0.5 6.5" stroke="#E3E7F3" stroke-width="1"/></svg>
<div class="a" style="left:754px;top:348.5px;width:426px;height:357.5px;background:#FFFFFF;"></div>
<div class="a" style="left:767px;top:349px;width:1px;height:15px;background:#DDE1EC;"></div>
<div class="a" style="left:1144.5px;top:349px;width:1px;height:15px;background:#DDE1EC;"></div>
<div class="a" style="left:754px;top:363.5px;width:413px;height:1px;background:#DDE1EC;"></div>
<div class="t" id="f67" style="left:771.00px;top:353.00px;font-size:10px;color:#1E1E1E;font-family:'Liberation Sans',sans-serif;letter-spacing:-0.615px;transform-origin:0 0;transform:scaleX(0.9258);">Name</div>
<div class="t" id="f68" style="left:1148.00px;top:353.00px;font-size:10px;color:#1E1E1E;font-family:'Liberation Sans',sans-serif;letter-spacing:0.167px;transform-origin:0 0;transform:scaleX(1.0256);width:19px;overflow:hidden">Lang</div>
<div class="a" style="left:754px;top:364.5px;width:413px;height:13px;background:#F0F0F0;"></div>
<div class="a" style="left:754px;top:377.5px;width:413px;height:1px;background:#F5F5F5;"></div>
<div class="a" style="left:754px;top:391px;width:413px;height:1px;background:#F5F5F5;"></div>
<svg class="a" style="left:756px;top:367px;" width="11" height="9" viewBox="0 0 11 9"><path d="M0.5 3 H4.5 V0.5 L10 4.5 L4.5 8.5 V6 H0.5 Z" fill="#F5D800" stroke="#6B5A00" stroke-width="0.8"/></svg>
<div class="t" id="f69" style="left:770.50px;top:368.00px;font-size:10px;color:#1E1E1E;font-family:'Liberation Sans',sans-serif;letter-spacing:-0.273px;transform-origin:0 0;transform:scaleX(0.9431);">[CUDA]ndWorldSceneCuda.cu!operator() Line 363 [0x0000000b00bf70e0]</div>
<div class="t" id="f70" style="left:770.50px;top:381.00px;font-size:10px;color:#1E1E1E;font-family:'Liberation Sans',sans-serif;letter-spacing:-0.210px;transform-origin:0 0;transform:scaleX(0.9538);">[CUDA]ndWorldSceneCuda.cu!CudaInitBodyArray&lt;struct lambda [] type at line 833641, c...</div>
<div class="a" style="left:1167px;top:348.5px;width:13px;height:357.5px;background:#F0F0F2;"></div>
<svg class="a" style="left:1169.5px;top:356px;" width="8" height="5" viewBox="0 0 8 5"><path d="M0.5 4.5 L4 0.8 L7.5 4.5 Z" fill="#C8C8CC"/></svg>
<svg class="a" style="left:1169.5px;top:697px;" width="8" height="5" viewBox="0 0 8 5"><path d="M0.5 0.5 L4 4.2 L7.5 0.5 Z" fill="#C8C8CC"/></svg>
<div class="a" style="left:754px;top:706px;width:48px;height:15.5px;background:#FFFFFF;"></div>
<div class="t" id="f71" style="left:758.00px;top:710.00px;font-size:9.5px;color:#1E1E1E;font-family:'Liberation Sans',sans-serif;letter-spacing:-0.209px;transform-origin:0 0;transform:scaleX(0.9539);">Call Stack</div>
<div class="a" style="left:802px;top:706px;width:57px;height:15px;background:#3F5290;"></div>
<div class="t" id="f72" style="left:806.00px;top:710.00px;font-size:9.5px;color:#E3E7F3;font-family:'Liberation Sans',sans-serif;letter-spacing:-0.109px;transform-origin:0 0;transform:scaleX(0.9779);">Breakpoints</div>
<div class="a" style="left:859.5px;top:706px;width:83.5px;height:15px;background:#3F5290;"></div>
<div class="t" id="f73" style="left:863.50px;top:710.00px;font-size:9.5px;color:#E3E7F3;font-family:'Liberation Sans',sans-serif;letter-spacing:-0.079px;transform-origin:0 0;transform:scaleX(0.9826);">Exception Settings</div>
<div class="a" style="left:943.5px;top:706px;width:88.5px;height:15px;background:#3F5290;"></div>
<div class="t" id="f74" style="left:947.50px;top:710.00px;font-size:9.5px;color:#E3E7F3;font-family:'Liberation Sans',sans-serif;letter-spacing:-0.019px;transform-origin:0 0;transform:none;">Command Window</div>
<div class="a" style="left:1032.5px;top:706px;width:90.5px;height:15px;background:#3F5290;"></div>
<div class="t" id="f75" style="left:1036.50px;top:710.00px;font-size:9.5px;color:#E3E7F3;font-family:'Liberation Sans',sans-serif;letter-spacing:0.081px;transform-origin:0 0;transform:none;">Immediate Window</div>
<div class="a" style="left:1123.5px;top:706px;width:39.5px;height:15px;background:#3F5290;"></div>
<div class="t" id="f76" style="left:1127.50px;top:710.00px;font-size:9.5px;color:#E3E7F3;font-family:'Liberation Sans',sans-serif;letter-spacing:0.094px;transform-origin:0 0;transform:none;">Output</div>
<div class="a" style="left:0px;top:726px;width:1200px;height:18px;background:#A34D40;"></div>
<div class="a" style="left:0px;top:744px;width:1200px;height:2px;background:#2B4A78;"></div>
<svg class="a" style="left:5px;top:729px;" width="14" height="12" viewBox="0 0 14 12"><path d="M3.5 1 H13 L10.5 11 H1 Z" fill="none" stroke="#F3E0DA" stroke-width="1.2"/></svg>
<div class="t" id="f77" style="left:24.00px;top:732.00px;font-size:10px;color:#FBEFEA;font-family:'Liberation Sans',sans-serif;letter-spacing:-0.613px;transform-origin:0 0;transform:scaleX(0.9073);">Ready</div>
<svg class="a" style="left:1032.5px;top:731px;" width="8" height="10" viewBox="0 0 8 10"><path d="M4 9.5 V1.5 M0.8 4.5 L4 1.2 L7.2 4.5" stroke="#FBEFEA" stroke-width="1.3" fill="none"/></svg>
<div class="t" id="f78" style="left:1048.00px;top:732.00px;font-size:10px;color:#FBEFEA;font-family:'Liberation Sans',sans-serif;letter-spacing:-0.185px;transform-origin:0 0;transform:scaleX(0.9610);">Add to Source Control</div>
<svg class="a" style="left:1144.5px;top:733.5px;" width="6" height="3.5" viewBox="0 0 6 3.5"><path d="M0 3.5 H6 L3 0 Z" fill="#FBEFEA"/></svg>
<svg class="a" style="left:1166px;top:729px;" width="10" height="12" viewBox="0 0 10 12"><path d="M5 1 Q1.5 1 1.5 5 V8 L0.5 9.5 H9.5 L8.5 8 V5 Q8.5 1 5 1 Z M3.8 10.5 H6.2" fill="#FBEFEA" stroke="#FBEFEA" stroke-width="0.8"/></svg>
<div class="a" style="left:0px;top:0px;width:2px;height:746px;background:#3F4C7C;"></div>
</body></html>
